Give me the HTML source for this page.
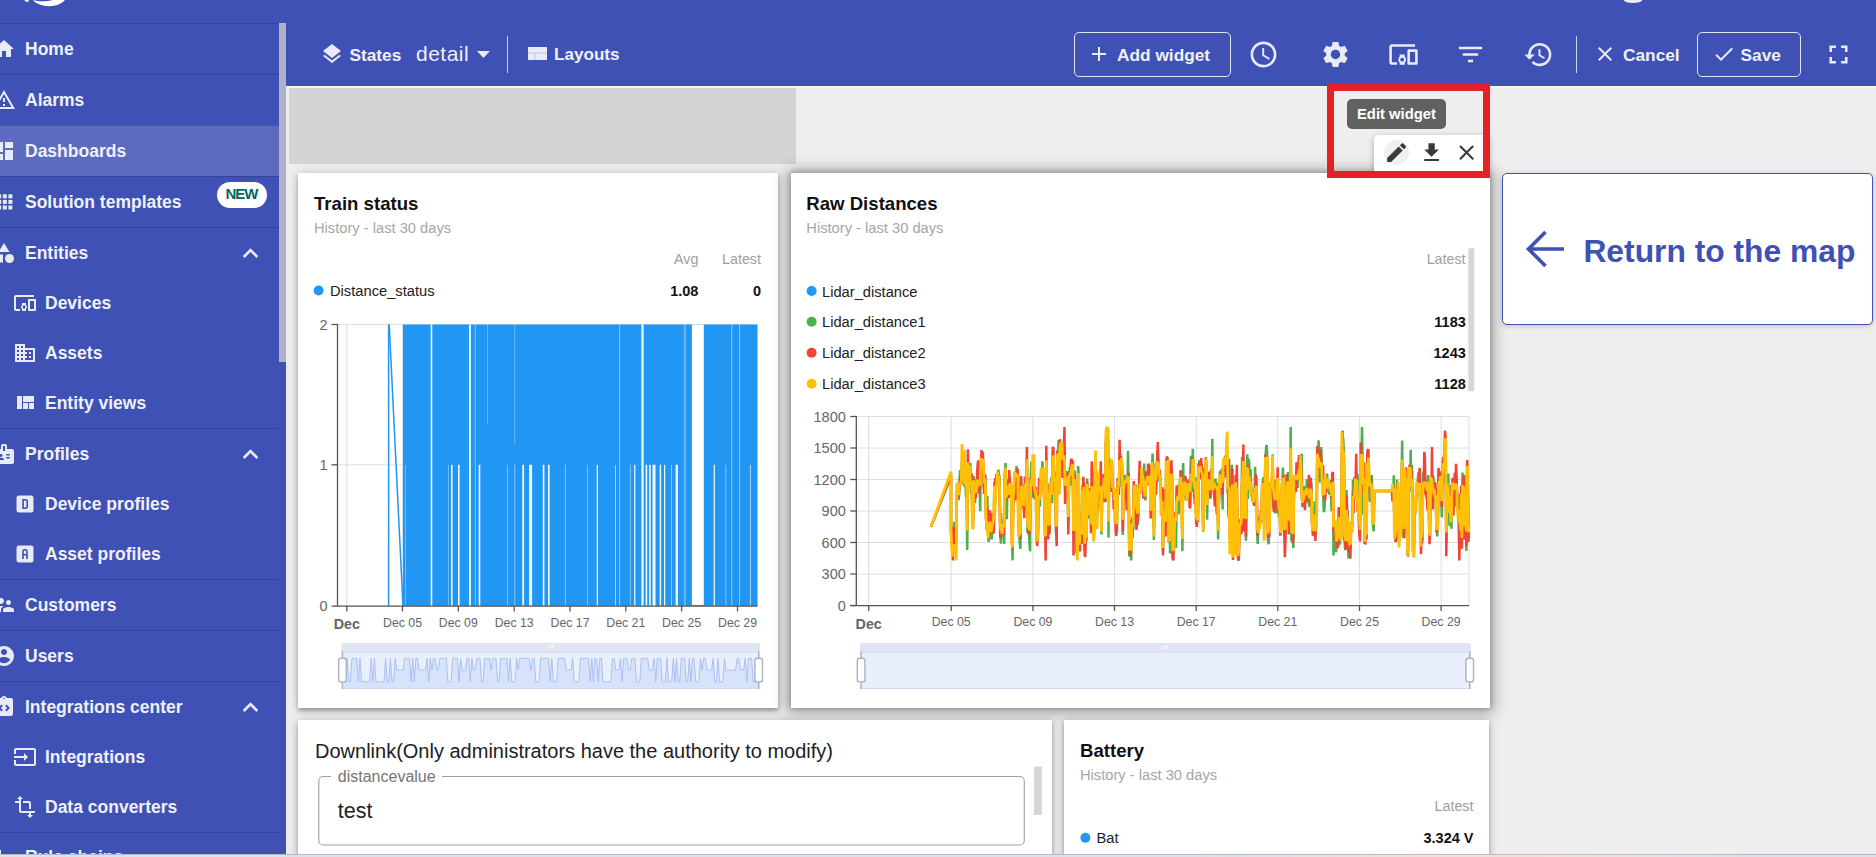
<!DOCTYPE html>
<html><head><meta charset="utf-8">
<style>
*{box-sizing:border-box;margin:0;padding:0}
html,body{width:1876px;height:857px;overflow:hidden;background:#eeeeee;font-family:"Liberation Sans",sans-serif}
.abs{position:absolute}
svg{display:block}
#sidebar{position:absolute;left:0;top:0;width:286px;height:857px;background:#3f51b5;overflow:hidden}
.sep{position:absolute;left:0;width:279px;height:1px;background:rgba(0,0,0,0.16)}
.mi{position:absolute;left:26px;color:#eef0fa;font-size:17.5px;font-weight:bold;white-space:nowrap;line-height:normal}
.ico{position:absolute}
#toolbar{position:absolute;left:0;top:0;width:1876px;height:86px}
.tb{position:absolute;color:#eef0fa;font-size:17.3px;font-weight:bold;white-space:nowrap}
.card{position:absolute;background:#fff;box-shadow:0 1px 3px rgba(0,0,0,0.2),0 1px 1px rgba(0,0,0,0.14)}
.title{position:absolute;font-size:18.6px;font-weight:bold;color:#111;white-space:nowrap}
.subt{position:absolute;font-size:14.7px;color:#a8a8a8;white-space:nowrap}
.lh{position:absolute;font-size:14.5px;color:#9e9e9e;white-space:nowrap}
.lt{position:absolute;font-size:14.7px;color:#222;white-space:nowrap}
.lv{position:absolute;font-size:14.5px;color:#111;font-weight:bold;white-space:nowrap}
.dot{position:absolute;width:10px;height:10px;border-radius:50%}
.ax{position:absolute;font-size:12.5px;color:#666;white-space:nowrap}
</style></head><body>
<div id="sidebar">
  <svg class="abs" style="left:0;top:0" width="80" height="10" viewBox="0 0 80 10"><path fill="#fff" d="M33 0 C36 4 43 6.2 49 6.2 C56 6.2 62 3.5 65 0 Z"/><path fill="#3f51b5" d="M33 0 C38 1.6 46 1.9 53 0 Z"/><path fill="#fff" d="M24.3 0 L29 0 C28.8 1 28 2 27 2 C26 2 25 1 24.3 0Z"/></svg>
  <div class="sep" style="top:23px"></div>
  <div class="sep" style="top:74px"></div>
  <div class="abs" style="left:0;top:125px;width:279px;height:51px;background:#5c6bc0"></div>
  <div class="sep" style="top:125px"></div>
  <div class="sep" style="top:176px"></div>
  <div class="sep" style="top:227px"></div>
  <div class="sep" style="top:428px"></div>
  <div class="sep" style="top:579px"></div>
  <div class="sep" style="top:630px"></div>
  <div class="sep" style="top:681px"></div>
  <div class="sep" style="top:832px"></div>
  <div class="abs" style="left:279px;top:23px;width:7px;height:339px;background:#aeb1c9"></div>
  <div class="abs" style="left:217px;top:182px;width:50px;height:26px;border-radius:13px;background:#fff"></div>
  <div class="abs" style="left:225.5px;top:185.3px;font-size:15px;font-weight:bold;color:#00695c;line-height:normal;letter-spacing:-1px">NEW</div>
<svg class="ico" style="left:-7.6px;top:36.5px" width="24" height="24" viewBox="0 0 24 24" fill="#e8eaf6"><path d="M10 20v-6h4v6h5v-8h3L12 3 2 12h3v8z"/></svg>
<div class="mi" style="left:25px;top:38.9px">Home</div>
<svg class="ico" style="left:-7.6px;top:87.5px" width="24" height="24" viewBox="0 0 24 24" fill="#e8eaf6"><path d="M12 5.99L19.53 19H4.47L12 5.99M12 2L1 21h22L12 2zm1 14h-2v2h2v-2zm0-6h-2v4h2v-4z"/></svg>
<div class="mi" style="left:25px;top:89.9px">Alarms</div>
<svg class="ico" style="left:-7.6px;top:138.5px" width="24" height="24" viewBox="0 0 24 24" fill="#e8eaf6"><path d="M3 13h8V3H3v10zm0 8h8v-6H3v6zm10 0h8V11h-8v10zm0-18v6h8V3h-8z"/></svg>
<div class="mi" style="left:25px;top:140.9px">Dashboards</div>
<svg class="ico" style="left:-7.6px;top:189.5px" width="24" height="24" viewBox="0 0 24 24" fill="#e8eaf6"><rect x="5.2" y="4.3" width="4" height="4"/><rect x="5.2" y="9.9" width="4" height="4"/><rect x="5.2" y="15.5" width="4" height="4"/><rect x="10.8" y="4.3" width="4" height="4"/><rect x="10.8" y="9.9" width="4" height="4"/><rect x="10.8" y="15.5" width="4" height="4"/><rect x="16.4" y="4.3" width="4" height="4"/><rect x="16.4" y="9.9" width="4" height="4"/><rect x="16.4" y="15.5" width="4" height="4"/></svg>
<div class="mi" style="left:25px;top:191.9px">Solution templates</div>
<svg class="ico" style="left:-7.6px;top:240.5px" width="24" height="24" viewBox="0 0 24 24" fill="#e8eaf6"><path d="M12 2l-5.5 9h11z"/><circle cx="17.5" cy="17.5" r="4.5"/><path d="M3 13.5h8v8H3z"/></svg>
<div class="mi" style="left:25px;top:242.9px">Entities</div>
<svg class="ico" style="left:235px;top:237.8px" width="31" height="31" viewBox="0 0 24 24" fill="#e8eaf6"><path d="M7.41 15.41L12 10.83l4.59 4.58L18 14l-6-6-6 6z"/></svg>
<svg class="ico" style="left:12.6px;top:291.0px" width="24" height="24" viewBox="0 0 24 24" fill="#e8eaf6"><path d="M3 6h18V4H3c-1.1 0-2 .9-2 2v12c0 1.1.9 2 2 2h4v-2H3V6zm10 6H9v1.78c-.61.55-1 1.33-1 2.22s.39 1.67 1 2.22V20h4v-1.78c.61-.55 1-1.34 1-2.22s-.39-1.67-1-2.22V12zm-2 5.5c-.83 0-1.5-.67-1.5-1.5s.67-1.5 1.5-1.5 1.5.67 1.5 1.5-.67 1.5-1.5 1.5zM22 8h-6c-.5 0-1 .5-1 1v10c0 .5.5 1 1 1h6c.5 0 1-.5 1-1V9c0-.5-.5-1-1-1zm-1 10h-4v-8h4v8z"/></svg>
<div class="mi" style="left:45px;top:293.4px">Devices</div>
<svg class="ico" style="left:12.6px;top:340.5px" width="24" height="24" viewBox="0 0 24 24" fill="#e8eaf6"><path d="M12 7V3H2v18h20V7H12zM6 19H4v-2h2v2zm0-4H4v-2h2v2zm0-4H4V9h2v2zm0-4H4V5h2v2zm4 12H8v-2h2v2zm0-4H8v-2h2v2zm0-4H8V9h2v2zm0-4H8V5h2v2zm10 12h-8v-2h2v-2h-2v-2h2v-2h-2V9h8v10zm-2-8h-2v2h2v-2zm0 4h-2v2h2v-2z"/></svg>
<div class="mi" style="left:45px;top:342.9px">Assets</div>
<svg class="ico" style="left:12.6px;top:391.0px" width="24" height="24" viewBox="0 0 24 24" fill="#e8eaf6"><path d="M10 18h5v-6h-5v6zm-6 0h5V5H4v13zm12 0h5v-6h-5v6zM10 5v6h11V5H10z"/></svg>
<div class="mi" style="left:45px;top:393.4px">Entity views</div>
<svg class="ico" style="left:-7.6px;top:441.5px" width="24" height="24" viewBox="0 0 24 24" fill="#e8eaf6"><path d="M20 7h-5V4c0-1.1-.9-2-2-2h-2c-1.1 0-2 .9-2 2v3H4c-1.1 0-2 .9-2 2v11c0 1.1.9 2 2 2h16c1.1 0 2-.9 2-2V9c0-1.1-.9-2-2-2zM9 12c.83 0 1.5.67 1.5 1.5S9.83 15 9 15s-1.5-.67-1.5-1.5S8.17 12 9 12zm3 6H6v-.43c0-.6.36-1.15.92-1.39.64-.28 1.34-.43 2.080-.43s1.44.15 2.08.43c.55.24.92.78.92 1.39V18zm1-9h-2V4h2v5zm4.25 7.5h-2.5c-.41 0-.75-.34-.75-.75s.34-.75.75-.75h2.5c.41 0 .75.34.75.75s-.34.75-.75.75zm0-3h-2.5c-.41 0-.75-.34-.75-.75s.34-.75.75-.75h2.5c.41 0 .75.34.75.75s-.34.75-.75.75z"/></svg>
<div class="mi" style="left:25px;top:443.9px">Profiles</div>
<svg class="ico" style="left:235px;top:438.8px" width="31" height="31" viewBox="0 0 24 24" fill="#e8eaf6"><path d="M7.41 15.41L12 10.83l4.59 4.58L18 14l-6-6-6 6z"/></svg>
<svg class="ico" style="left:12.6px;top:492.0px" width="24" height="24" viewBox="0 0 24 24" fill="#e8eaf6"><rect x="3.5" y="3.5" width="17" height="17" rx="2.5"/><path fill="#3f51b5" d="M9.2 7h3.6c1.4 0 2.2.9 2.2 2.2v5.6c0 1.3-.8 2.2-2.2 2.2H9.2zM10.9 8.6v6.8h1.7c.5 0 .8-.3.8-.9V9.5c0-.6-.3-.9-.8-.9z"/></svg>
<div class="mi" style="left:45px;top:494.4px">Device profiles</div>
<svg class="ico" style="left:12.6px;top:542.0px" width="24" height="24" viewBox="0 0 24 24" fill="#e8eaf6"><rect x="3.5" y="3.5" width="17" height="17" rx="2.5"/><path fill="#3f51b5" d="M9.2 17V9.4C9.2 7.9 10.100 7 11.4 7h1.2c1.4 0 2.200.9 2.2 2.4V17h-1.6v-3.400h-2.4V17zM10.8 12.100h2.4V9.6c0-.6-.3-1-.8-1h-.8c-.5 0-.8.4-.8 1z"/></svg>
<div class="mi" style="left:45px;top:544.4px">Asset profiles</div>
<svg class="ico" style="left:-7.6px;top:592.5px" width="24" height="24" viewBox="0 0 24 24" fill="#e8eaf6"><path d="M16.5 12c1.38 0 2.49-1.12 2.49-2.5S17.88 7 16.5 7C15.12 7 14 8.12 14 9.5s1.12 2.5 2.5 2.5zM9 11c1.66 0 2.99-1.34 2.99-3S10.66 5 9 5C7.34 5 6 6.34 6 8s1.34 3 3 3zm7.5 3c-1.830 0-5.5.92-5.5 2.75V19h11v-2.25c0-1.83-3.67-2.75-5.5-2.75zM9 13c-2.33 0-7 1.17-7 3.5V19h7v-2.25c0-.85.33-2.34 2.37-3.47C10.5 13.1 9.66 13 9 13z"/></svg>
<div class="mi" style="left:25px;top:594.9px">Customers</div>
<svg class="ico" style="left:-7.6px;top:643.5px" width="24" height="24" viewBox="0 0 24 24" fill="#e8eaf6"><path d="M12 2C6.48 2 2 6.48 2 12s4.48 10 10 10 10-4.48 10-10S17.52 2 12 2zm0 3c1.66 0 3 1.34 3 3s-1.34 3-3 3-3-1.34-3-3 1.34-3 3-3zm0 14.2c-2.5 0-4.71-1.28-6-3.22.03-1.99 4-3.08 6-3.08 1.99 0 5.970 1.09 6 3.08-1.29 1.94-3.5 3.22-6 3.22z"/></svg>
<div class="mi" style="left:25px;top:645.9px">Users</div>
<svg class="ico" style="left:-7.6px;top:694.5px" width="24" height="24" viewBox="0 0 24 24" fill="#e8eaf6"><path d="M19 3h-4.18C14.4 1.84 13.3 1 12 1s-2.4.84-2.82 2H5c-1.1 0-2 .9-2 2v14c0 1.1.9 2 2 2h14c1.1 0 2-.9 2-2V5c0-1.1-.9-2-2-2zm-7-.25c.41 0 .75.34.75.75s-.34.75-.75.75-.75-.34-.75-.75.34-.75.75-.75zM9.5 16.5L6 13l3.5-3.5 1.41 1.41L8.83 13l2.08 2.09L9.5 16.5zm5 0l-1.41-1.41L15.17 13l-2.08-2.09L14.5 9.5 18 13l-3.5 3.5z"/></svg>
<div class="mi" style="left:25px;top:696.9px">Integrations center</div>
<svg class="ico" style="left:235px;top:691.8px" width="31" height="31" viewBox="0 0 24 24" fill="#e8eaf6"><path d="M7.41 15.41L12 10.83l4.59 4.58L18 14l-6-6-6 6z"/></svg>
<svg class="ico" style="left:12.6px;top:745.0px" width="24" height="24" viewBox="0 0 24 24" fill="#e8eaf6"><path d="M21 3.01H3c-1.1 0-2 .9-2 2V9h2V4.99h18v14.03H3V15H1v4.01c0 1.1.9 1.98 2 1.98h18c1.1 0 2-.88 2-1.98v-14c0-1.11-.9-2-2-2zM11 16l4-4-4-4v3H1v2h10v3z"/></svg>
<div class="mi" style="left:45px;top:747.4px">Integrations</div>
<svg class="ico" style="left:12.6px;top:795.0px" width="24" height="24" viewBox="0 0 24 24" fill="#e8eaf6"><path d="M22 18v-2H8V4h2L7 1 4 4h2v2H2v2h4v8c0 1.1.9 2 2 2h8v2h-2l3 3 3-3h-2v-2h4zM10 8h6v6h2V8c0-1.1-.9-2-2-2h-6v2z"/></svg>
<div class="mi" style="left:45px;top:797.4px">Data converters</div>
<svg class="ico" style="left:-7.6px;top:844.5px" width="24" height="24" viewBox="0 0 24 24" fill="#e8eaf6"><path d="M3 5h6v4H3zM15 15h6v4h-6zM6 9h2v4h8v2h-2v-0H6z"/></svg>
<div class="mi" style="left:25px;top:846.9px">Rule chains</div>
</div>
<div class="abs" style="left:286px;top:0;width:1590px;height:86px;background:#3f51b5"></div>
<div class="abs" style="left:1624px;top:-3px;width:18px;height:5.5px;border-radius:50%;background:#e8eaf6"></div>
<!-- States -->
<svg class="ico" style="left:319.8px;top:41.6px" width="24" height="24" viewBox="0 0 24 24" fill="#e8eaf6"><path d="M11.99 18.54l-7.37-5.73L3 14.07l9 7 9-7-1.63-1.27-7.38 5.74zM12 16l7.36-5.73L21 9l-9-7-9 7 1.63 1.27L12 16z"/></svg>
<div class="tb" style="left:349.4px;top:44.5px">States</div>
<div class="tb" style="left:416px;top:41.5px;font-weight:normal;font-size:21px;letter-spacing:0.5px">detail</div>
<svg class="ico" style="left:477.4px;top:50.8px" width="13" height="7" viewBox="0 0 13 7" fill="#e8eaf6"><path d="M0 0h13L6.5 7z"/></svg>
<div class="abs" style="left:507px;top:36px;width:1.2px;height:37px;background:rgba(255,255,255,0.75)"></div>
<!-- Layouts -->
<svg class="ico" style="left:527.6px;top:46.8px" width="19.4" height="13.4" viewBox="0 0 19.4 13.4"><rect width="19.4" height="13.4" fill="#e8eaf6"/><rect y="5.6" width="19.4" height="0.9" fill="#b9bfe6"/><rect x="6.6" y="6" width="0.9" height="7.4" fill="#b9bfe6"/></svg>
<div class="tb" style="left:554px;top:44.8px;font-size:17.1px">Layouts</div>
<!-- right -->
<div class="abs" style="left:1074px;top:32px;width:157px;height:45px;border:1.3px solid rgba(255,255,255,0.85);border-radius:5px"></div>
<svg class="ico" style="left:1087.4px;top:41.7px" width="24" height="24" viewBox="0 0 24 24" fill="#e8eaf6"><path d="M19 13h-6v6h-2v-6H5v-2h6V5h2v6h6v2z"/></svg>
<div class="tb" style="left:1117px;top:45px">Add widget</div>
<svg class="ico" style="left:1247.5px;top:38.5px" width="31" height="31" viewBox="0 0 24 24" fill="#e8eaf6"><path d="M11.99 2C6.47 2 2 6.48 2 12s4.47 10 9.99 10C17.52 22 22 17.52 22 12S17.52 2 11.99 2zM12 20c-4.42 0-8-3.58-8-8s3.58-8 8-8 8 3.58 8 8-3.58 8-8 8zm.5-13H11v6l5.25 3.15.75-1.23-4.5-2.67z"/></svg>
<svg class="ico" style="left:1320px;top:38.5px" width="31" height="31" viewBox="0 0 24 24" fill="#e8eaf6"><path d="M19.14 12.94c.04-.3.06-.61.06-.94 0-.32-.02-.64-.07-.94l2.03-1.58c.18-.14.23-.41.12-.61l-1.92-3.32c-.12-.22-.37-.29-.59-.22l-2.39.96c-.5-.38-1.03-.7-1.62-.94l-.36-2.54c-.04-.24-.24-.41-.48-.41h-3.84c-.24 0-.43.17-.47.41l-.36 2.54c-.59.24-1.130.57-1.62.94l-2.39-.96c-.22-.08-.47 0-.59.22L2.74 8.87c-.12.21-.08.47.12.61l2.03 1.58c-.05.3-.09.63-.09.94s.02.64.07.94l-2.03 1.58c-.18.14-.23.41-.12.61l1.92 3.32c.12.22.37.29.59.22l2.39-.96c.5.38 1.03.7 1.62.94l.36 2.54c.05.24.24.41.48.41h3.84c.24 0 .44-.17.47-.41l.36-2.54c.59-.24 1.13-.56 1.62-.94l2.39.96c.22.08.47 0 .59-.22l1.92-3.32c.12-.22.07-.47-.12-.61l-2.01-1.58zM12 15.6c-1.98 0-3.6-1.62-3.6-3.6s1.62-3.6 3.6-3.6 3.6 1.62 3.6 3.6-1.62 3.6-3.6 3.6z"/></svg>
<svg class="ico" style="left:1387.5px;top:38.7px" width="31" height="31" viewBox="0 0 24 24" fill="#e8eaf6"><path d="M3 6h18V4H3c-1.1 0-2 .9-2 2v12c0 1.1.9 2 2 2h4v-2H3V6zm10 6H9v1.78c-.61.55-1 1.33-1 2.22s.39 1.67 1 2.22V20h4v-1.78c.61-.55 1-1.34 1-2.22s-.39-1.67-1-2.22V12zm-2 5.5c-.83 0-1.5-.67-1.5-1.5s.67-1.5 1.5-1.5 1.5.67 1.5 1.5-.67 1.5-1.5 1.5zM22 8h-6c-.5 0-1 .5-1 1v10c0 .5.5 1 1 1h6c.5 0 1-.5 1-1V9c0-.5-.5-1-1-1zm-1 10h-4v-8h4v8z"/></svg>
<svg class="ico" style="left:1454.9px;top:38.6px" width="31" height="31" viewBox="0 0 24 24" fill="#e8eaf6"><path d="M10 18h4v-2h-4v2zM3 6v2h18V6H3zm3 7h12v-2H6v2z"/></svg>
<svg class="ico" style="left:1522.7px;top:38.7px" width="31" height="31" viewBox="0 0 24 24" fill="#e8eaf6"><path d="M13 3c-4.97 0-9 4.03-9 9H1l3.89 3.89.07.14L9 12H6c0-3.87 3.13-7 7-7s7 3.13 7 7-3.13 7-7 7c-1.93 0-3.68-.79-4.94-2.06l-1.42 1.42C8.27 19.99 10.51 21 13 21c4.97 0 9-4.03 9-9s-4.03-9-9-9zm-1 5v5l4.28 2.54.72-1.21-3.5-2.08V8H12z"/></svg>
<div class="abs" style="left:1576px;top:36px;width:1.2px;height:37px;background:rgba(255,255,255,0.75)"></div>
<svg class="ico" style="left:1593.4px;top:42.2px" width="24" height="24" viewBox="0 0 24 24" fill="#e8eaf6"><path d="M19 6.41L17.59 5 12 10.59 6.41 5 5 6.41 10.59 12 5 17.590 6.41 19 12 13.41 17.59 19 19 17.59 13.41 12z"/></svg>
<div class="tb" style="left:1623px;top:45px">Cancel</div>
<div class="abs" style="left:1697px;top:32px;width:104px;height:45px;border:1.3px solid rgba(255,255,255,0.85);border-radius:5px"></div>
<svg class="ico" style="left:1711.7px;top:41.7px" width="24" height="24" viewBox="0 0 24 24" fill="#e8eaf6"><path d="M9 16.17L4.83 12l-1.42 1.41L9 19 21 7l-1.41-1.41z"/></svg>
<div class="tb" style="left:1740.5px;top:45px">Save</div>
<svg class="ico" style="left:1822.5px;top:38.5px" width="31" height="31" viewBox="0 0 24 24" fill="#e8eaf6"><path d="M7 14H5v5h5v-2H7v-3zm-2-4h2V7h3V5H5v5zm12 7h-3v2h5v-5h-2v3zM14 5v2h3v3h2V5h-5z"/></svg>
<div class="abs" style="left:286px;top:86px;width:1590px;height:2px;background:#f4f4f4"></div>
<div class="abs" style="left:289px;top:88px;width:507px;height:76px;background:#d3d4d6"></div>
<div class="card" style="left:298px;top:173px;width:480px;height:535px;box-shadow:0 3px 4px rgba(0,0,0,0.28),0 1px 10px rgba(0,0,0,0.2)"></div>
<div class="card" style="left:791px;top:173px;width:699px;height:535px;box-shadow:0 0 5px 1px rgba(0,0,0,0.22),0 1px 14px 4px rgba(0,0,0,0.3)"></div>
<div class="card" style="left:298px;top:720px;width:754px;height:140px;box-shadow:0 3px 4px rgba(0,0,0,0.28),0 1px 10px rgba(0,0,0,0.2)"></div>
<div class="card" style="left:1064px;top:720px;width:425px;height:140px;box-shadow:0 3px 4px rgba(0,0,0,0.28),0 1px 10px rgba(0,0,0,0.2)"></div>
<div class="card" style="left:1502px;top:173px;width:371px;height:152px;border:1px solid #3f51b5;border-radius:5px;box-shadow:0 1px 5px rgba(0,0,0,0.2)"></div>
<svg class="abs" style="left:0;top:0" width="1876" height="857" viewBox="0 0 1876 857" font-family="Liberation Sans, sans-serif">
<text x="314.0" y="210.0" font-size="18.60" fill="#111" font-weight="bold" text-anchor="start" >Train status</text>
<text x="314.0" y="232.7" font-size="14.70" fill="#a6a6a6" font-weight="normal" text-anchor="start" >History - last 30 days</text>
<text x="698.4" y="264.0" font-size="14.30" fill="#9e9e9e" font-weight="normal" text-anchor="end" >Avg</text>
<text x="761.0" y="264.0" font-size="14.30" fill="#9e9e9e" font-weight="normal" text-anchor="end" >Latest</text>
<circle cx="318.6" cy="290.5" r="5" fill="#2196f3"/>
<text x="330.0" y="296.0" font-size="14.70" fill="#212121" font-weight="normal" text-anchor="start" >Distance_status</text>
<text x="698.4" y="296.0" font-size="14.50" fill="#111" font-weight="bold" text-anchor="end" >1.08</text>
<text x="761.0" y="296.0" font-size="14.50" fill="#111" font-weight="bold" text-anchor="end" >0</text>
<line x1="346.8" y1="324.5" x2="346.8" y2="606" stroke="#dedede" stroke-width="1"/>
<line x1="402.5" y1="324.5" x2="402.5" y2="606" stroke="#dedede" stroke-width="1"/>
<line x1="458.3" y1="324.5" x2="458.3" y2="606" stroke="#dedede" stroke-width="1"/>
<line x1="514.2" y1="324.5" x2="514.2" y2="606" stroke="#dedede" stroke-width="1"/>
<line x1="570.0" y1="324.5" x2="570.0" y2="606" stroke="#dedede" stroke-width="1"/>
<line x1="625.8" y1="324.5" x2="625.8" y2="606" stroke="#dedede" stroke-width="1"/>
<line x1="681.6" y1="324.5" x2="681.6" y2="606" stroke="#dedede" stroke-width="1"/>
<line x1="737.5" y1="324.5" x2="737.5" y2="606" stroke="#dedede" stroke-width="1"/>
<line x1="337.5" y1="324.5" x2="757.5" y2="324.5" stroke="#dedede" stroke-width="1"/>
<line x1="337.5" y1="464.8" x2="757.5" y2="464.8" stroke="#dedede" stroke-width="1"/>
<path d="M388.5 324.5 L403 606 L388.5 606 Z" fill="none"/>
<line x1="388.6" y1="324.5" x2="388.6" y2="606" stroke="#2196f3" stroke-width="1.5"/>
<line x1="389.2" y1="324.5" x2="403" y2="606" stroke="#2196f3" stroke-width="1.5"/>
<rect x="403" y="324.5" width="354.5" height="281.5" fill="#2196f3"/>
<rect x="430.7" y="324.5" width="1.6" height="281.5" fill="#fff" opacity="0.95"/>
<rect x="469.1" y="324.5" width="1.8" height="281.5" fill="#fff" opacity="0.95"/>
<rect x="474.9" y="324.5" width="0.7" height="281.5" fill="#fff" opacity="0.60"/>
<rect x="641.4" y="324.5" width="2.2" height="281.5" fill="#fff" opacity="0.95"/>
<rect x="619.3" y="324.5" width="0.8" height="281.5" fill="#fff" opacity="0.60"/>
<rect x="684.4" y="324.5" width="1.0" height="281.5" fill="#fff" opacity="0.60"/>
<rect x="731.4" y="324.5" width="0.8" height="281.5" fill="#fff" opacity="0.60"/>
<rect x="739.1" y="324.5" width="0.8" height="281.5" fill="#fff" opacity="0.60"/>
<rect x="405.0" y="464.8" width="0.6" height="141.2" fill="#fff" opacity="0.60"/>
<rect x="448.0" y="464.8" width="0.6" height="141.2" fill="#fff" opacity="0.60"/>
<rect x="451.0" y="464.8" width="1.6" height="141.2" fill="#fff" opacity="0.95"/>
<rect x="458.0" y="464.8" width="1.6" height="141.2" fill="#fff" opacity="0.95"/>
<rect x="478.7" y="464.8" width="1.6" height="141.2" fill="#fff" opacity="0.95"/>
<rect x="507.1" y="464.8" width="0.7" height="141.2" fill="#fff" opacity="0.60"/>
<rect x="514.4" y="464.8" width="0.8" height="141.2" fill="#fff" opacity="0.60"/>
<rect x="522.3" y="464.8" width="1.8" height="141.2" fill="#fff" opacity="0.95"/>
<rect x="529.1" y="464.8" width="3.0" height="141.2" fill="#fff" opacity="0.95"/>
<rect x="542.8" y="464.8" width="1.6" height="141.2" fill="#fff" opacity="0.95"/>
<rect x="548.0" y="464.8" width="1.6" height="141.2" fill="#fff" opacity="0.95"/>
<rect x="564.9" y="464.8" width="0.8" height="141.2" fill="#fff" opacity="0.60"/>
<rect x="587.1" y="464.8" width="0.7" height="141.2" fill="#fff" opacity="0.60"/>
<rect x="596.7" y="464.8" width="1.2" height="141.2" fill="#fff" opacity="0.95"/>
<rect x="615.0" y="464.8" width="1.0" height="141.2" fill="#fff" opacity="0.60"/>
<rect x="629.9" y="464.8" width="0.7" height="141.2" fill="#fff" opacity="0.60"/>
<rect x="634.2" y="464.8" width="1.2" height="141.2" fill="#fff" opacity="0.95"/>
<rect x="645.6" y="464.8" width="1.6" height="141.2" fill="#fff" opacity="0.95"/>
<rect x="649.1" y="464.8" width="1.6" height="141.2" fill="#fff" opacity="0.95"/>
<rect x="652.5" y="464.8" width="3.0" height="141.2" fill="#fff" opacity="0.95"/>
<rect x="659.7" y="464.8" width="1.4" height="141.2" fill="#fff" opacity="0.95"/>
<rect x="664.0" y="464.8" width="1.2" height="141.2" fill="#fff" opacity="0.95"/>
<rect x="671.2" y="464.8" width="0.8" height="141.2" fill="#fff" opacity="0.60"/>
<rect x="675.6" y="464.8" width="2.4" height="141.2" fill="#fff" opacity="0.95"/>
<rect x="713.7" y="464.8" width="1.2" height="141.2" fill="#fff" opacity="0.95"/>
<rect x="725.5" y="464.8" width="0.8" height="141.2" fill="#fff" opacity="0.60"/>
<rect x="749.9" y="464.8" width="1.0" height="141.2" fill="#fff" opacity="0.60"/>
<rect x="691.9" y="324.5" width="11.9" height="280.5" fill="#fff"/>
<rect x="487" y="324.5" width="0.8" height="100" fill="#fff" opacity="0.4"/>
<rect x="514.4" y="324.5" width="0.8" height="120" fill="#fff" opacity="0.4"/>
<line x1="337.5" y1="324" x2="337.5" y2="606.5" stroke="#555" stroke-width="1.3"/>
<line x1="331.5" y1="606.2" x2="757.5" y2="606.2" stroke="#555" stroke-width="1.3"/>
<line x1="331.5" y1="324.5" x2="337.5" y2="324.5" stroke="#555" stroke-width="1.3"/>
<line x1="331.5" y1="464.8" x2="337.5" y2="464.8" stroke="#555" stroke-width="1.3"/>
<line x1="346.8" y1="606" x2="346.8" y2="611.5" stroke="#555" stroke-width="1.3"/>
<line x1="402.5" y1="606" x2="402.5" y2="611.5" stroke="#555" stroke-width="1.3"/>
<line x1="458.3" y1="606" x2="458.3" y2="611.5" stroke="#555" stroke-width="1.3"/>
<line x1="514.2" y1="606" x2="514.2" y2="611.5" stroke="#555" stroke-width="1.3"/>
<line x1="570.0" y1="606" x2="570.0" y2="611.5" stroke="#555" stroke-width="1.3"/>
<line x1="625.8" y1="606" x2="625.8" y2="611.5" stroke="#555" stroke-width="1.3"/>
<line x1="681.6" y1="606" x2="681.6" y2="611.5" stroke="#555" stroke-width="1.3"/>
<line x1="737.5" y1="606" x2="737.5" y2="611.5" stroke="#555" stroke-width="1.3"/>
<text x="327.5" y="329.6" font-size="14.50" fill="#666" font-weight="normal" text-anchor="end" >2</text>
<text x="327.5" y="469.9" font-size="14.50" fill="#666" font-weight="normal" text-anchor="end" >1</text>
<text x="327.5" y="611.2" font-size="14.50" fill="#666" font-weight="normal" text-anchor="end" >0</text>
<text x="346.8" y="628.6" font-size="14.30" fill="#666" font-weight="bold" text-anchor="middle" >Dec</text>
<text x="402.5" y="626.9" font-size="12.30" fill="#666" font-weight="normal" text-anchor="middle" >Dec 05</text>
<text x="458.3" y="626.9" font-size="12.30" fill="#666" font-weight="normal" text-anchor="middle" >Dec 09</text>
<text x="514.2" y="626.9" font-size="12.30" fill="#666" font-weight="normal" text-anchor="middle" >Dec 13</text>
<text x="570.0" y="626.9" font-size="12.30" fill="#666" font-weight="normal" text-anchor="middle" >Dec 17</text>
<text x="625.8" y="626.9" font-size="12.30" fill="#666" font-weight="normal" text-anchor="middle" >Dec 21</text>
<text x="681.6" y="626.9" font-size="12.30" fill="#666" font-weight="normal" text-anchor="middle" >Dec 25</text>
<text x="737.5" y="626.9" font-size="12.30" fill="#666" font-weight="normal" text-anchor="middle" >Dec 29</text>
<path d="M341.2 652.5 V645 Q341.2 643 343.2 643 H758.0 Q760.0 643 760.0 645 V652.5 Z" fill="#dfe5f3"/>
<rect x="341.2" y="652" width="418.8" height="37" fill="#e9effc"/>
<path d="M344.0 658.4 L345.6 658.4 L347.2 658.4 L348.8 681.9 L350.4 681.9 L352.0 658.4 L353.6 658.4 L355.2 658.4 L356.8 658.4 L358.4 681.9 L360.0 658.4 L361.6 681.9 L363.2 681.9 L364.8 681.9 L366.4 681.9 L368.0 681.9 L369.6 681.9 L371.2 658.4 L372.8 681.9 L374.4 658.4 L376.0 681.9 L377.6 681.9 L379.2 681.9 L380.8 681.9 L382.4 681.9 L384.0 681.9 L385.6 658.4 L387.2 681.9 L388.8 681.9 L390.4 658.4 L392.0 681.9 L393.6 681.9 L395.2 658.4 L396.7 670.1 L398.3 670.1 L399.9 670.1 L401.5 670.1 L403.1 670.1 L404.7 658.4 L406.3 658.4 L407.9 658.4 L409.5 658.4 L411.1 681.9 L412.7 658.4 L414.3 681.9 L415.9 658.4 L417.5 658.4 L419.1 670.1 L420.7 670.1 L422.3 670.1 L423.9 670.1 L425.5 670.1 L427.1 658.4 L428.7 681.9 L430.3 658.4 L431.9 670.1 L433.5 658.4 L435.1 658.4 L436.7 670.1 L438.3 670.1 L439.9 658.4 L441.5 658.4 L443.1 658.4 L444.7 658.4 L446.3 658.4 L447.9 681.9 L449.5 681.9 L451.1 681.9 L452.7 658.4 L454.3 658.4 L455.9 658.4 L457.5 658.4 L459.1 681.9 L460.7 658.4 L462.3 670.1 L463.9 670.1 L465.5 670.1 L467.1 658.4 L468.7 658.4 L470.3 681.9 L471.9 658.4 L473.5 670.1 L475.1 670.1 L476.7 658.4 L478.3 658.4 L479.9 658.4 L481.5 681.9 L483.1 681.9 L484.7 658.4 L486.3 658.4 L487.9 658.4 L489.5 658.4 L491.1 670.1 L492.7 658.4 L494.3 658.4 L495.9 658.4 L497.5 681.9 L499.1 681.9 L500.6 658.4 L502.2 658.4 L503.8 658.4 L505.4 658.4 L507.0 658.4 L508.6 681.9 L510.2 658.4 L511.8 681.9 L513.4 681.9 L515.0 681.9 L516.6 658.4 L518.2 670.1 L519.8 658.4 L521.4 658.4 L523.0 658.4 L524.6 658.4 L526.2 658.4 L527.8 658.4 L529.4 658.4 L531.0 670.1 L532.6 658.4 L534.2 658.4 L535.8 681.9 L537.4 681.9 L539.0 681.9 L540.6 658.4 L542.2 658.4 L543.8 658.4 L545.4 658.4 L547.0 658.4 L548.6 658.4 L550.2 681.9 L551.8 658.4 L553.4 681.9 L555.0 681.9 L556.6 681.9 L558.2 658.4 L559.8 658.4 L561.4 658.4 L563.0 658.4 L564.6 658.4 L566.2 670.1 L567.8 670.1 L569.4 670.1 L571.0 670.1 L572.6 658.4 L574.2 681.9 L575.8 681.9 L577.4 681.9 L579.0 681.9 L580.6 658.4 L582.2 658.4 L583.8 658.4 L585.4 658.4 L587.0 658.4 L588.6 658.4 L590.2 681.9 L591.8 658.4 L593.4 681.9 L595.0 658.4 L596.6 658.4 L598.2 681.9 L599.8 658.4 L601.4 658.4 L602.9 681.9 L604.5 681.9 L606.1 681.9 L607.7 681.9 L609.3 681.9 L610.9 681.9 L612.5 658.4 L614.1 658.4 L615.7 670.1 L617.3 670.1 L618.9 670.1 L620.5 658.4 L622.1 681.9 L623.7 658.4 L625.3 658.4 L626.9 658.4 L628.5 670.1 L630.1 670.1 L631.7 658.4 L633.3 658.4 L634.9 658.4 L636.5 681.9 L638.1 681.9 L639.7 681.9 L641.3 658.4 L642.9 658.4 L644.5 658.4 L646.1 658.4 L647.7 658.4 L649.3 670.1 L650.9 670.1 L652.5 670.1 L654.1 658.4 L655.7 681.9 L657.3 658.4 L658.9 658.4 L660.5 658.4 L662.1 681.9 L663.7 681.9 L665.3 681.9 L666.9 658.4 L668.5 681.9 L670.1 681.9 L671.7 681.9 L673.3 658.4 L674.9 681.9 L676.5 658.4 L678.1 681.9 L679.7 681.9 L681.3 658.4 L682.9 658.4 L684.5 658.4 L686.1 681.9 L687.7 681.9 L689.3 658.4 L690.9 681.9 L692.5 658.4 L694.1 658.4 L695.7 681.9 L697.3 681.9 L698.9 681.9 L700.5 658.4 L702.1 670.1 L703.7 658.4 L705.3 658.4 L706.8 670.1 L708.4 670.1 L710.0 670.1 L711.6 670.1 L713.2 658.4 L714.8 681.9 L716.4 681.9 L718.0 658.4 L719.6 681.9 L721.2 681.9 L722.8 681.9 L724.4 658.4 L726.0 670.1 L727.6 670.1 L729.2 670.1 L730.8 670.1 L732.4 670.1 L734.0 670.1 L735.6 670.1 L737.2 658.4 L738.8 658.4 L740.4 670.1 L742.0 670.1 L743.6 670.1 L745.2 658.4 L746.8 681.9 L748.4 658.4 L750.0 658.4 L751.6 658.4 L753.2 681.9 L754.8 681.9 L756.4 658.4 L758.0 658.4 L758 688.5 L344 688.5 Z" fill="#d7e3fb"/><path d="M344.0 658.4 L345.6 658.4 L347.2 658.4 L348.8 681.9 L350.4 681.9 L352.0 658.4 L353.6 658.4 L355.2 658.4 L356.8 658.4 L358.4 681.9 L360.0 658.4 L361.6 681.9 L363.2 681.9 L364.8 681.9 L366.4 681.9 L368.0 681.9 L369.6 681.9 L371.2 658.4 L372.8 681.9 L374.4 658.4 L376.0 681.9 L377.6 681.9 L379.2 681.9 L380.8 681.9 L382.4 681.9 L384.0 681.9 L385.6 658.4 L387.2 681.9 L388.8 681.9 L390.4 658.4 L392.0 681.9 L393.6 681.9 L395.2 658.4 L396.7 670.1 L398.3 670.1 L399.9 670.1 L401.5 670.1 L403.1 670.1 L404.7 658.4 L406.3 658.4 L407.9 658.4 L409.5 658.4 L411.1 681.9 L412.7 658.4 L414.3 681.9 L415.9 658.4 L417.5 658.4 L419.1 670.1 L420.7 670.1 L422.3 670.1 L423.9 670.1 L425.5 670.1 L427.1 658.4 L428.7 681.9 L430.3 658.4 L431.9 670.1 L433.5 658.4 L435.1 658.4 L436.7 670.1 L438.3 670.1 L439.9 658.4 L441.5 658.4 L443.1 658.4 L444.7 658.4 L446.3 658.4 L447.9 681.9 L449.5 681.9 L451.1 681.9 L452.7 658.4 L454.3 658.4 L455.9 658.4 L457.5 658.4 L459.1 681.9 L460.7 658.4 L462.3 670.1 L463.9 670.1 L465.5 670.1 L467.1 658.4 L468.7 658.4 L470.3 681.9 L471.9 658.4 L473.5 670.1 L475.1 670.1 L476.7 658.4 L478.3 658.4 L479.9 658.4 L481.5 681.9 L483.1 681.9 L484.7 658.4 L486.3 658.4 L487.9 658.4 L489.5 658.4 L491.1 670.1 L492.7 658.4 L494.3 658.4 L495.9 658.4 L497.5 681.9 L499.1 681.9 L500.6 658.4 L502.2 658.4 L503.8 658.4 L505.4 658.4 L507.0 658.4 L508.6 681.9 L510.2 658.4 L511.8 681.9 L513.4 681.9 L515.0 681.9 L516.6 658.4 L518.2 670.1 L519.8 658.4 L521.4 658.4 L523.0 658.4 L524.6 658.4 L526.2 658.4 L527.8 658.4 L529.4 658.4 L531.0 670.1 L532.6 658.4 L534.2 658.4 L535.8 681.9 L537.4 681.9 L539.0 681.9 L540.6 658.4 L542.2 658.4 L543.8 658.4 L545.4 658.4 L547.0 658.4 L548.6 658.4 L550.2 681.9 L551.8 658.4 L553.4 681.9 L555.0 681.9 L556.6 681.9 L558.2 658.4 L559.8 658.4 L561.4 658.4 L563.0 658.4 L564.6 658.4 L566.2 670.1 L567.8 670.1 L569.4 670.1 L571.0 670.1 L572.6 658.4 L574.2 681.9 L575.8 681.9 L577.4 681.9 L579.0 681.9 L580.6 658.4 L582.2 658.4 L583.8 658.4 L585.4 658.4 L587.0 658.4 L588.6 658.4 L590.2 681.9 L591.8 658.4 L593.4 681.9 L595.0 658.4 L596.6 658.4 L598.2 681.9 L599.8 658.4 L601.4 658.4 L602.9 681.9 L604.5 681.9 L606.1 681.9 L607.7 681.9 L609.3 681.9 L610.9 681.9 L612.5 658.4 L614.1 658.4 L615.7 670.1 L617.3 670.1 L618.9 670.1 L620.5 658.4 L622.1 681.9 L623.7 658.4 L625.3 658.4 L626.9 658.4 L628.5 670.1 L630.1 670.1 L631.7 658.4 L633.3 658.4 L634.9 658.4 L636.5 681.9 L638.1 681.9 L639.7 681.9 L641.3 658.4 L642.9 658.4 L644.5 658.4 L646.1 658.4 L647.7 658.4 L649.3 670.1 L650.9 670.1 L652.5 670.1 L654.1 658.4 L655.7 681.9 L657.3 658.4 L658.9 658.4 L660.5 658.4 L662.1 681.9 L663.7 681.9 L665.3 681.9 L666.9 658.4 L668.5 681.9 L670.1 681.9 L671.7 681.9 L673.3 658.4 L674.9 681.9 L676.5 658.4 L678.1 681.9 L679.7 681.9 L681.3 658.4 L682.9 658.4 L684.5 658.4 L686.1 681.9 L687.7 681.9 L689.3 658.4 L690.9 681.9 L692.5 658.4 L694.1 658.4 L695.7 681.9 L697.3 681.9 L698.9 681.9 L700.5 658.4 L702.1 670.1 L703.7 658.4 L705.3 658.4 L706.8 670.1 L708.4 670.1 L710.0 670.1 L711.6 670.1 L713.2 658.4 L714.8 681.9 L716.4 681.9 L718.0 658.4 L719.6 681.9 L721.2 681.9 L722.8 681.9 L724.4 658.4 L726.0 670.1 L727.6 670.1 L729.2 670.1 L730.8 670.1 L732.4 670.1 L734.0 670.1 L735.6 670.1 L737.2 658.4 L738.8 658.4 L740.4 670.1 L742.0 670.1 L743.6 670.1 L745.2 658.4 L746.8 681.9 L748.4 658.4 L750.0 658.4 L751.6 658.4 L753.2 681.9 L754.8 681.9 L756.4 658.4 L758.0 658.4" fill="none" stroke="#a9c1f3" stroke-width="1"/>
<line x1="341.2" y1="652.3" x2="760.0" y2="652.3" stroke="#d3dcef" stroke-width="1"/>
<line x1="341.2" y1="688.5" x2="760.0" y2="688.5" stroke="#d3dcef" stroke-width="1"/>
<rect x="547.9" y="645.5" width="0.9" height="3.5" fill="#fff"/>
<rect x="550.1" y="645.5" width="0.9" height="3.5" fill="#fff"/>
<rect x="552.4" y="645.5" width="0.9" height="3.5" fill="#fff"/>
<line x1="342.5" y1="651.5" x2="342.5" y2="689" stroke="#aab3c8" stroke-width="1.4"/>
<rect x="338.7" y="658.3" width="7.6" height="23.6" rx="2.5" fill="#fff" stroke="#aab3c8" stroke-width="1.4"/>
<line x1="758.7" y1="651.5" x2="758.7" y2="689" stroke="#aab3c8" stroke-width="1.4"/>
<rect x="754.9" y="658.3" width="7.6" height="23.6" rx="2.5" fill="#fff" stroke="#aab3c8" stroke-width="1.4"/>
<text x="806.3" y="209.7" font-size="18.60" fill="#111" font-weight="bold" text-anchor="start" >Raw Distances</text>
<text x="806.3" y="232.7" font-size="14.70" fill="#a6a6a6" font-weight="normal" text-anchor="start" >History - last 30 days</text>
<text x="1465.6" y="264.0" font-size="14.30" fill="#9e9e9e" font-weight="normal" text-anchor="end" >Latest</text>
<circle cx="811.6" cy="291.0" r="5" fill="#2196f3"/>
<text x="822.0" y="296.5" font-size="14.70" fill="#212121" font-weight="normal" text-anchor="start" >Lidar_distance</text>
<circle cx="811.6" cy="321.8" r="5" fill="#4caf50"/>
<text x="822.0" y="327.3" font-size="14.70" fill="#212121" font-weight="normal" text-anchor="start" >Lidar_distance1</text>
<text x="1465.8" y="327.3" font-size="14.50" fill="#111" font-weight="bold" text-anchor="end" >1183</text>
<circle cx="811.6" cy="352.8" r="5" fill="#f44336"/>
<text x="822.0" y="358.3" font-size="14.70" fill="#212121" font-weight="normal" text-anchor="start" >Lidar_distance2</text>
<text x="1465.8" y="358.3" font-size="14.50" fill="#111" font-weight="bold" text-anchor="end" >1243</text>
<circle cx="811.6" cy="383.8" r="5" fill="#ffc107"/>
<text x="822.0" y="389.3" font-size="14.70" fill="#212121" font-weight="normal" text-anchor="start" >Lidar_distance3</text>
<text x="1465.8" y="389.3" font-size="14.50" fill="#111" font-weight="bold" text-anchor="end" >1128</text>
<rect x="1468.3" y="248.3" width="6" height="143" fill="#d6d6d6"/>
<line x1="868.7" y1="416.5" x2="868.7" y2="605.5" stroke="#dedede" stroke-width="1"/>
<line x1="951.2" y1="416.5" x2="951.2" y2="605.5" stroke="#dedede" stroke-width="1"/>
<line x1="1032.9" y1="416.5" x2="1032.9" y2="605.5" stroke="#dedede" stroke-width="1"/>
<line x1="1114.5" y1="416.5" x2="1114.5" y2="605.5" stroke="#dedede" stroke-width="1"/>
<line x1="1196.2" y1="416.5" x2="1196.2" y2="605.5" stroke="#dedede" stroke-width="1"/>
<line x1="1277.8" y1="416.5" x2="1277.8" y2="605.5" stroke="#dedede" stroke-width="1"/>
<line x1="1359.5" y1="416.5" x2="1359.5" y2="605.5" stroke="#dedede" stroke-width="1"/>
<line x1="1441.1" y1="416.5" x2="1441.1" y2="605.5" stroke="#dedede" stroke-width="1"/>
<line x1="1469" y1="416.5" x2="1469" y2="605.5" stroke="#dedede" stroke-width="1"/>
<line x1="856.3" y1="574.0" x2="1469.0" y2="574.0" stroke="#dedede" stroke-width="1"/>
<line x1="856.3" y1="542.5" x2="1469.0" y2="542.5" stroke="#dedede" stroke-width="1"/>
<line x1="856.3" y1="511.0" x2="1469.0" y2="511.0" stroke="#dedede" stroke-width="1"/>
<line x1="856.3" y1="479.5" x2="1469.0" y2="479.5" stroke="#dedede" stroke-width="1"/>
<line x1="856.3" y1="448.0" x2="1469.0" y2="448.0" stroke="#dedede" stroke-width="1"/>
<line x1="856.3" y1="416.5" x2="1469.0" y2="416.5" stroke="#dedede" stroke-width="1"/>
<g fill="none" stroke-width="2.5" stroke-linejoin="miter" stroke-miterlimit="2">
<path d="M931 526.8 L951 476.9 L951.0 532.3 L951.6 527.8 L952.3 541.0 L952.9 556.5 L953.6 535.6 L954.2 521.8 L954.9 551.0 L955.5 540.4 L956.2 542.4 L956.8 490.3 L957.5 492.9 L958.1 488.0 L958.8 500.1 L959.4 482.7 L960.1 470.1 L960.7 475.5 L961.4 480.8 L962.0 461.1 L962.7 465.7 L963.3 460.8 L964.0 484.1 L964.6 486.7 L965.3 471.9 L965.9 496.9 L966.6 489.9 L967.2 550.0 L967.9 487.3 L968.5 472.7 L969.2 466.7 L969.8 466.6 L970.4 462.9 L971.1 493.4 L971.7 487.3 L972.4 510.2 L973.0 523.4 L973.7 476.1 L974.3 487.2 L975.0 503.3 L975.6 486.1 L976.3 486.7 L976.9 493.7 L977.6 488.5 L978.2 483.5 L978.9 474.7 L979.5 483.8 L980.2 511.2 L980.8 462.1 L981.5 467.2 L982.1 456.8 L982.8 454.0 L983.4 477.4 L984.1 488.2 L984.7 473.5 L985.4 491.1 L986.0 511.4 L986.7 529.9 L987.3 495.7 L988.0 530.3 L988.6 541.9 L989.3 531.3 L989.9 516.0 L990.5 526.3 L991.2 538.1 L991.8 539.3 L992.5 517.1 L993.1 523.4 L993.8 516.8 L994.4 482.2 L995.1 505.0 L995.7 485.9 L996.4 476.7 L997.0 479.7 L997.7 484.5 L998.3 469.7 L999.0 474.4 L999.6 477.3 L1000.3 533.0 L1000.9 543.7 L1001.6 530.8 L1002.2 532.8 L1002.9 521.3 L1003.5 526.8 L1004.2 544.0 L1004.8 482.7 L1005.5 463.0 L1006.1 489.2 L1006.8 519.1 L1007.4 490.3 L1008.1 486.1 L1008.7 485.9 L1009.3 475.3 L1010.0 481.1 L1010.6 484.5 L1011.3 490.0 L1011.9 531.7 L1012.6 560.4 L1013.2 497.9 L1013.9 496.3 L1014.5 487.7 L1015.2 471.1 L1015.8 480.4 L1016.5 466.1 L1017.1 478.5 L1017.8 471.0 L1018.4 523.0 L1019.1 530.9 L1019.7 542.8 L1020.4 548.8 L1021.0 477.3 L1021.7 494.9 L1022.3 506.1 L1023.0 498.2 L1023.6 501.4 L1024.3 491.5 L1024.9 484.8 L1025.6 485.0 L1026.2 491.9 L1026.9 458.5 L1027.5 533.3 L1028.1 517.2 L1028.8 513.6 L1029.4 542.4 L1030.1 551.3 L1030.7 479.7 L1031.4 461.5 L1032.0 495.0 L1032.7 497.4 L1033.3 475.1 L1034.0 484.0 L1034.6 498.4 L1035.3 497.0 L1035.9 488.6 L1036.6 542.5 L1037.2 536.1 L1037.9 540.4 L1038.5 505.6 L1039.2 500.7 L1039.8 506.6 L1040.5 484.5 L1041.1 476.1 L1041.8 485.5 L1042.4 461.4 L1043.1 475.7 L1043.7 493.3 L1044.4 488.0 L1045.0 535.5 L1045.7 533.6 L1046.3 457.9 L1046.9 491.8 L1047.6 534.0 L1048.2 518.3 L1048.9 530.0 L1049.5 534.4 L1050.2 485.9 L1050.8 495.9 L1051.5 476.8 L1052.1 503.3 L1052.8 452.6 L1053.4 474.3 L1054.1 480.0 L1054.7 471.5 L1055.4 482.2 L1056.0 532.0 L1056.7 523.9 L1057.3 452.0 L1058.0 452.3 L1058.6 440.0 L1059.3 494.3 L1059.9 451.1 L1060.6 446.7 L1061.2 446.2 L1061.9 444.5 L1062.5 460.7 L1063.2 458.8 L1063.8 476.2 L1064.5 452.6 L1065.1 490.7 L1065.8 496.3 L1066.4 477.7 L1067.0 471.2 L1067.7 479.0 L1068.3 522.4 L1069.0 483.5 L1069.6 470.1 L1070.3 466.4 L1070.9 485.5 L1071.6 473.2 L1072.2 465.0 L1072.9 480.5 L1073.5 534.6 L1074.2 486.5 L1074.8 470.5 L1075.5 518.2 L1076.1 552.9 L1076.8 526.9 L1077.4 542.5 L1078.1 466.0 L1078.7 474.9 L1079.4 539.9 L1080.0 543.7 L1080.7 516.4 L1081.3 514.6 L1082.0 543.7 L1082.6 485.8 L1083.3 495.7 L1083.9 489.5 L1084.6 550.2 L1085.2 520.6 L1085.8 527.3 L1086.5 541.0 L1087.1 478.5 L1087.8 495.4 L1088.4 515.3 L1089.1 518.4 L1089.7 493.2 L1090.4 503.0 L1091.0 528.2 L1091.7 488.1 L1092.3 489.3 L1093.0 485.6 L1093.6 537.6 L1094.3 527.8 L1094.9 470.1 L1095.6 468.4 L1096.2 529.0 L1096.9 527.7 L1097.5 504.2 L1098.2 487.3 L1098.8 498.8 L1099.5 495.1 L1100.1 484.7 L1100.8 484.2 L1101.4 534.5 L1102.1 506.6 L1102.7 483.6 L1103.4 478.2 L1104.0 494.0 L1104.6 473.4 L1105.3 501.5 L1105.9 440.8 L1106.6 429.3 L1107.2 431.9 L1107.9 428.3 L1108.5 537.6 L1109.2 458.0 L1109.8 480.8 L1110.5 489.7 L1111.1 469.3 L1111.8 462.1 L1112.4 484.8 L1113.1 491.0 L1113.7 489.4 L1114.4 488.6 L1115.0 523.5 L1115.7 493.7 L1116.3 528.7 L1117.0 532.4 L1117.6 485.7 L1118.3 482.3 L1118.9 488.6 L1119.6 468.2 L1120.2 454.2 L1120.9 476.7 L1121.5 486.4 L1122.2 465.8 L1122.8 534.9 L1123.5 494.8 L1124.1 483.8 L1124.7 474.8 L1125.4 492.0 L1126.0 489.2 L1126.7 476.9 L1127.3 503.3 L1128.0 450.7 L1128.6 486.6 L1129.3 556.6 L1129.9 541.5 L1130.6 550.0 L1131.2 560.4 L1131.9 519.3 L1132.5 517.1 L1133.2 529.5 L1133.8 491.4 L1134.5 484.1 L1135.1 497.3 L1135.8 484.6 L1136.4 509.9 L1137.1 518.2 L1137.7 524.9 L1138.4 513.9 L1139.0 493.8 L1139.7 476.1 L1140.3 488.2 L1141.0 482.2 L1141.6 472.9 L1142.3 471.7 L1142.9 487.9 L1143.5 474.2 L1144.2 463.6 L1144.8 497.5 L1145.5 500.2 L1146.1 478.8 L1146.8 481.8 L1147.4 483.9 L1148.1 476.9 L1148.7 480.9 L1149.4 464.6 L1150.0 478.2 L1150.7 506.2 L1151.3 500.2 L1152.0 470.0 L1152.6 453.6 L1153.3 473.2 L1153.9 539.9 L1154.6 484.6 L1155.2 482.2 L1155.9 494.3 L1156.5 463.3 L1157.2 478.7 L1157.8 449.8 L1158.5 463.7 L1159.1 479.5 L1159.8 482.1 L1160.4 477.1 L1161.1 500.5 L1161.7 508.3 L1162.3 507.1 L1163.0 551.7 L1163.6 524.6 L1164.3 510.8 L1164.9 508.9 L1165.6 519.5 L1166.2 458.9 L1166.9 476.0 L1167.5 457.3 L1168.2 463.7 L1168.8 527.5 L1169.5 516.9 L1170.1 553.6 L1170.8 475.9 L1171.4 488.7 L1172.1 472.8 L1172.7 559.8 L1173.4 552.0 L1174.0 545.4 L1174.7 516.0 L1175.3 521.1 L1176.0 547.9 L1176.6 507.2 L1177.3 490.1 L1177.9 498.5 L1178.6 514.4 L1179.2 490.5 L1179.9 480.2 L1180.5 475.9 L1181.2 487.3 L1181.8 510.2 L1182.4 551.2 L1183.1 463.0 L1183.7 489.8 L1184.4 478.8 L1185.0 475.6 L1185.7 500.2 L1186.3 493.7 L1187.0 492.8 L1187.6 482.0 L1188.3 481.3 L1188.9 499.5 L1189.6 483.6 L1190.2 480.9 L1190.9 455.9 L1191.5 491.8 L1192.2 466.5 L1192.8 448.8 L1193.5 474.2 L1194.1 498.1 L1194.8 481.9 L1195.4 477.1 L1196.1 524.1 L1196.7 512.6 L1197.4 516.6 L1198.0 503.4 L1198.7 469.8 L1199.3 460.4 L1200.0 478.3 L1200.6 471.5 L1201.2 476.0 L1201.9 464.3 L1202.5 499.5 L1203.2 531.8 L1203.8 471.8 L1204.5 470.9 L1205.1 493.7 L1205.8 463.0 L1206.4 462.4 L1207.1 519.8 L1207.7 481.7 L1208.4 481.3 L1209.0 491.7 L1209.7 476.5 L1210.3 498.8 L1211.0 491.0 L1211.6 490.3 L1212.3 438.8 L1212.9 489.8 L1213.6 482.9 L1214.2 479.3 L1214.9 484.6 L1215.5 478.6 L1216.2 499.2 L1216.8 511.3 L1217.5 482.5 L1218.1 539.5 L1218.8 504.6 L1219.4 492.0 L1220.0 470.9 L1220.7 473.2 L1221.3 488.1 L1222.0 472.8 L1222.6 509.4 L1223.3 462.8 L1223.9 460.9 L1224.6 463.4 L1225.2 455.7 L1225.9 461.6 L1226.5 467.9 L1227.2 455.0 L1227.8 493.3 L1228.5 484.9 L1229.1 483.6 L1229.8 519.6 L1230.4 538.4 L1231.1 517.1 L1231.7 464.9 L1232.4 482.8 L1233.0 537.5 L1233.7 549.9 L1234.3 554.9 L1235.0 531.6 L1235.6 495.6 L1236.3 490.1 L1236.9 497.2 L1237.6 540.5 L1238.2 537.8 L1238.8 542.6 L1239.5 519.2 L1240.1 526.6 L1240.8 522.1 L1241.4 514.2 L1242.1 457.0 L1242.7 468.5 L1243.4 479.8 L1244.0 515.3 L1244.7 520.2 L1245.3 522.6 L1246.0 540.7 L1246.6 469.7 L1247.3 454.2 L1247.9 499.0 L1248.6 458.8 L1249.2 462.2 L1249.9 483.7 L1250.5 469.2 L1251.2 486.2 L1251.8 496.9 L1252.5 490.5 L1253.1 501.9 L1253.8 504.3 L1254.4 504.0 L1255.1 466.7 L1255.7 484.9 L1256.4 487.1 L1257.0 529.6 L1257.7 543.9 L1258.3 527.1 L1258.9 518.1 L1259.6 522.4 L1260.2 521.2 L1260.9 510.1 L1261.5 521.9 L1262.2 489.1 L1262.8 482.0 L1263.5 477.3 L1264.1 482.4 L1264.8 488.0 L1265.4 457.9 L1266.1 447.6 L1266.7 445.1 L1267.4 458.3 L1268.0 540.8 L1268.7 544.2 L1269.3 531.5 L1270.0 482.6 L1270.6 490.5 L1271.3 480.3 L1271.9 485.5 L1272.6 454.2 L1273.2 509.3 L1273.9 486.9 L1274.5 500.0 L1275.2 513.3 L1275.8 479.8 L1276.5 513.4 L1277.1 491.2 L1277.7 491.6 L1278.4 498.1 L1279.0 517.0 L1279.7 502.3 L1280.3 525.9 L1281.0 529.0 L1281.6 495.8 L1282.3 489.2 L1282.9 467.6 L1283.6 495.6 L1284.2 536.4 L1284.9 511.3 L1285.5 520.9 L1286.2 526.1 L1286.8 474.0 L1287.5 491.1 L1288.1 472.1 L1288.8 514.0 L1289.4 534.5 L1290.1 521.6 L1290.7 427.0 L1291.4 541.4 L1292.0 533.6 L1292.7 520.9 L1293.3 548.1 L1294.0 495.3 L1294.6 488.8 L1295.3 481.9 L1295.9 482.0 L1296.5 470.4 L1297.2 473.6 L1297.8 487.9 L1298.5 470.8 L1299.1 457.6 L1299.8 464.0 L1300.4 466.0 L1301.1 475.2 L1301.7 453.8 L1302.4 507.5 L1303.0 491.3 L1303.7 499.2 L1304.3 487.7 L1305.0 486.4 L1305.6 501.1 L1306.3 489.6 L1306.9 479.3 L1307.6 503.3 L1308.2 497.9 L1308.9 499.9 L1309.5 507.1 L1310.2 483.8 L1310.8 480.5 L1311.5 485.4 L1312.1 525.8 L1312.8 528.6 L1313.4 525.8 L1314.1 530.7 L1314.7 501.3 L1315.4 513.9 L1316.0 510.6 L1316.6 524.5 L1317.3 456.6 L1317.9 458.9 L1318.6 440.4 L1319.2 463.1 L1319.9 482.5 L1320.5 461.0 L1321.2 447.0 L1321.8 466.0 L1322.5 485.1 L1323.1 493.0 L1323.8 512.0 L1324.4 510.5 L1325.1 496.2 L1325.7 485.6 L1326.4 481.5 L1327.0 473.7 L1327.7 483.5 L1328.3 484.9 L1329.0 490.7 L1329.6 494.7 L1330.3 480.0 L1330.9 494.1 L1331.6 511.3 L1332.2 495.5 L1332.9 484.6 L1333.5 555.5 L1334.2 529.7 L1334.8 527.0 L1335.4 537.4 L1336.1 552.3 L1336.7 542.7 L1337.4 543.5 L1338.0 526.4 L1338.7 518.7 L1339.3 537.2 L1340.0 544.7 L1340.6 530.0 L1341.3 518.7 L1341.9 451.8 L1342.6 452.6 L1343.2 437.9 L1343.9 455.7 L1344.5 539.7 L1345.2 550.2 L1345.8 541.7 L1346.5 489.9 L1347.1 523.9 L1347.8 510.4 L1348.4 558.4 L1349.1 543.9 L1349.7 536.7 L1350.4 547.4 L1351.0 522.8 L1351.7 522.9 L1352.3 525.5 L1353.0 480.0 L1353.6 488.9 L1354.2 499.1 L1354.9 487.3 L1355.5 488.9 L1356.2 476.4 L1356.8 483.9 L1357.5 474.1 L1358.1 496.2 L1358.8 515.7 L1359.4 534.8 L1360.1 515.7 L1360.7 476.4 L1361.4 462.8 L1362.0 427.0 L1362.7 467.2 L1363.3 514.7 L1364.0 486.2 L1364.6 532.9 L1365.3 532.0 L1365.9 529.5 L1366.6 527.7 L1367.2 460.7 L1367.9 450.5 L1368.5 449.4 L1369.2 489.8 L1369.8 501.7 L1370.5 500.2 L1371.1 490.1 L1371.8 475.1 L1372.4 519.6 L1373.1 526.9 L1373.7 531.4 L1374.3 491.1 L1375.0 491.1 L1375.6 491.1 L1376.3 491.1 L1376.9 491.1 L1377.6 491.1 L1378.2 491.1 L1378.9 491.1 L1379.5 491.1 L1380.2 491.1 L1380.8 491.1 L1381.5 491.1 L1382.1 491.1 L1382.8 491.1 L1383.4 491.1 L1384.1 491.1 L1384.7 491.1 L1385.4 491.1 L1386.0 491.1 L1386.7 491.1 L1387.3 491.1 L1388.0 491.1 L1388.6 491.1 L1389.3 491.1 L1389.9 491.1 L1390.6 491.1 L1391.2 491.1 L1391.9 491.1 L1392.5 484.2 L1393.1 499.6 L1393.8 475.2 L1394.4 531.8 L1395.1 520.7 L1395.7 542.0 L1396.4 538.7 L1397.0 479.5 L1397.7 513.4 L1398.3 493.4 L1399.0 540.2 L1399.6 528.1 L1400.3 503.5 L1400.9 535.4 L1401.6 475.4 L1402.2 440.6 L1402.9 535.0 L1403.5 538.1 L1404.2 527.2 L1404.8 511.4 L1405.5 488.2 L1406.1 515.8 L1406.8 476.3 L1407.4 555.0 L1408.1 547.3 L1408.7 474.2 L1409.4 477.1 L1410.0 490.6 L1410.7 449.7 L1411.3 491.4 L1411.9 465.1 L1412.6 515.0 L1413.2 525.4 L1413.9 557.3 L1414.5 502.7 L1415.2 514.8 L1415.8 501.4 L1416.5 488.3 L1417.1 483.6 L1417.8 479.7 L1418.4 472.3 L1419.1 492.3 L1419.7 469.3 L1420.4 541.8 L1421.0 542.8 L1421.7 540.1 L1422.3 543.6 L1423.0 472.8 L1423.6 473.4 L1424.3 469.7 L1424.9 481.9 L1425.6 485.8 L1426.2 493.9 L1426.9 499.3 L1427.5 484.2 L1428.2 475.0 L1428.8 508.8 L1429.5 529.8 L1430.1 520.7 L1430.7 480.3 L1431.4 484.5 L1432.0 483.6 L1432.7 503.9 L1433.3 475.8 L1434.0 489.7 L1434.6 483.9 L1435.3 493.8 L1435.9 507.3 L1436.6 528.7 L1437.2 536.4 L1437.9 520.9 L1438.5 473.5 L1439.2 478.1 L1439.8 486.9 L1440.5 484.8 L1441.1 479.3 L1441.8 517.2 L1442.4 476.8 L1443.1 460.9 L1443.7 483.3 L1444.4 466.7 L1445.0 441.5 L1445.7 450.9 L1446.3 542.1 L1447.0 481.9 L1447.6 487.1 L1448.3 473.4 L1448.9 518.4 L1449.6 525.8 L1450.2 484.9 L1450.8 512.7 L1451.5 528.7 L1452.1 496.3 L1452.8 482.9 L1453.4 499.0 L1454.1 487.8 L1454.7 505.2 L1455.4 488.8 L1456.0 506.6 L1456.7 488.8 L1457.3 495.8 L1458.0 515.7 L1458.6 494.1 L1459.3 532.0 L1459.9 517.9 L1460.6 540.1 L1461.2 485.4 L1461.9 538.9 L1462.5 472.5 L1463.2 499.0 L1463.8 489.9 L1464.5 525.2 L1465.1 512.7 L1465.8 508.8 L1466.4 551.1 L1467.1 474.4 L1467.7 480.1 L1468.4 514.9 L1469.0 528.4" stroke="#4caf50"/>
<path d="M931 526.8 L951 474.2 L951.0 533.7 L951.6 540.5 L952.3 548.0 L952.9 560.4 L953.6 527.1 L954.2 533.3 L954.9 549.0 L955.5 538.6 L956.2 543.2 L956.8 498.4 L957.5 483.9 L958.1 496.1 L958.8 496.2 L959.4 488.6 L960.1 476.8 L960.7 482.1 L961.4 476.0 L962.0 484.5 L962.7 476.9 L963.3 466.8 L964.0 476.2 L964.6 482.4 L965.3 481.0 L965.9 480.3 L966.6 473.9 L967.2 524.7 L967.9 449.3 L968.5 484.2 L969.2 485.0 L969.8 482.9 L970.4 475.0 L971.1 481.7 L971.7 473.5 L972.4 522.7 L973.0 527.6 L973.7 479.6 L974.3 483.9 L975.0 479.5 L975.6 498.4 L976.3 491.7 L976.9 479.8 L977.6 465.0 L978.2 460.3 L978.9 493.1 L979.5 488.2 L980.2 473.7 L980.8 464.6 L981.5 449.9 L982.1 480.1 L982.8 451.7 L983.4 470.7 L984.1 493.9 L984.7 479.0 L985.4 474.9 L986.0 518.9 L986.7 510.3 L987.3 507.7 L988.0 527.6 L988.6 532.8 L989.3 535.6 L989.9 510.4 L990.5 530.7 L991.2 530.6 L991.8 529.9 L992.5 512.8 L993.1 529.1 L993.8 533.4 L994.4 512.4 L995.1 478.1 L995.7 487.6 L996.4 474.0 L997.0 476.9 L997.7 483.9 L998.3 472.3 L999.0 477.6 L999.6 497.7 L1000.3 538.1 L1000.9 513.0 L1001.6 526.4 L1002.2 524.7 L1002.9 531.2 L1003.5 535.1 L1004.2 520.2 L1004.8 472.4 L1005.5 478.6 L1006.1 496.9 L1006.8 498.9 L1007.4 488.5 L1008.1 479.6 L1008.7 498.2 L1009.3 470.1 L1010.0 489.9 L1010.6 482.1 L1011.3 495.5 L1011.9 543.7 L1012.6 541.2 L1013.2 500.7 L1013.9 503.2 L1014.5 480.6 L1015.2 482.0 L1015.8 489.0 L1016.5 500.1 L1017.1 473.5 L1017.8 468.7 L1018.4 528.4 L1019.1 511.3 L1019.7 531.5 L1020.4 538.8 L1021.0 476.1 L1021.7 503.7 L1022.3 490.4 L1023.0 508.6 L1023.6 496.2 L1024.3 518.1 L1024.9 476.6 L1025.6 486.6 L1026.2 494.2 L1026.9 447.1 L1027.5 516.3 L1028.1 523.1 L1028.8 535.0 L1029.4 528.4 L1030.1 529.5 L1030.7 478.7 L1031.4 478.0 L1032.0 491.8 L1032.7 490.7 L1033.3 485.7 L1034.0 488.8 L1034.6 499.3 L1035.3 494.5 L1035.9 487.1 L1036.6 526.2 L1037.2 546.3 L1037.9 533.5 L1038.5 501.9 L1039.2 478.0 L1039.8 498.1 L1040.5 479.8 L1041.1 474.3 L1041.8 482.8 L1042.4 473.3 L1043.1 478.8 L1043.7 489.5 L1044.4 507.6 L1045.0 525.2 L1045.7 560.4 L1046.3 445.7 L1046.9 497.2 L1047.6 484.1 L1048.2 539.4 L1048.9 520.4 L1049.5 532.9 L1050.2 482.0 L1050.8 491.9 L1051.5 495.2 L1052.1 489.7 L1052.8 447.0 L1053.4 447.9 L1054.1 480.8 L1054.7 492.9 L1055.4 487.6 L1056.0 527.9 L1056.7 546.1 L1057.3 451.5 L1058.0 460.9 L1058.6 461.0 L1059.3 487.3 L1059.9 439.2 L1060.6 443.4 L1061.2 455.0 L1061.9 442.6 L1062.5 478.1 L1063.2 449.8 L1063.8 450.6 L1064.5 427.0 L1065.1 503.9 L1065.8 484.1 L1066.4 495.7 L1067.0 473.0 L1067.7 476.1 L1068.3 534.4 L1069.0 483.1 L1069.6 473.8 L1070.3 477.0 L1070.9 460.3 L1071.6 458.8 L1072.2 468.5 L1072.9 460.4 L1073.5 555.4 L1074.2 479.2 L1074.8 473.9 L1075.5 528.9 L1076.1 534.0 L1076.8 521.9 L1077.4 508.7 L1078.1 474.6 L1078.7 487.1 L1079.4 531.4 L1080.0 551.4 L1080.7 528.9 L1081.3 539.2 L1082.0 543.5 L1082.6 497.3 L1083.3 476.8 L1083.9 486.5 L1084.6 554.6 L1085.2 556.9 L1085.8 541.2 L1086.5 526.0 L1087.1 482.1 L1087.8 488.6 L1088.4 515.3 L1089.1 506.1 L1089.7 488.4 L1090.4 489.3 L1091.0 533.3 L1091.7 461.4 L1092.3 473.3 L1093.0 498.5 L1093.6 513.1 L1094.3 528.0 L1094.9 471.7 L1095.6 485.1 L1096.2 516.5 L1096.9 517.4 L1097.5 497.8 L1098.2 509.1 L1098.8 477.4 L1099.5 493.6 L1100.1 492.5 L1100.8 461.2 L1101.4 510.6 L1102.1 478.5 L1102.7 491.8 L1103.4 474.6 L1104.0 502.3 L1104.6 479.7 L1105.3 502.1 L1105.9 442.3 L1106.6 445.2 L1107.2 427.0 L1107.9 429.4 L1108.5 521.0 L1109.2 467.2 L1109.8 483.1 L1110.5 486.8 L1111.1 491.9 L1111.8 461.9 L1112.4 480.7 L1113.1 489.2 L1113.7 509.3 L1114.4 502.1 L1115.0 495.4 L1115.7 531.5 L1116.3 536.0 L1117.0 506.7 L1117.6 478.4 L1118.3 493.7 L1118.9 493.7 L1119.6 439.8 L1120.2 473.7 L1120.9 456.0 L1121.5 472.3 L1122.2 469.7 L1122.8 531.7 L1123.5 499.6 L1124.1 495.9 L1124.7 498.2 L1125.4 492.5 L1126.0 489.7 L1126.7 510.1 L1127.3 479.4 L1128.0 491.2 L1128.6 472.4 L1129.3 552.1 L1129.9 542.8 L1130.6 556.2 L1131.2 536.0 L1131.9 520.0 L1132.5 538.0 L1133.2 518.1 L1133.8 481.0 L1134.5 514.1 L1135.1 495.8 L1135.8 493.2 L1136.4 530.0 L1137.1 521.9 L1137.7 520.8 L1138.4 507.0 L1139.0 482.7 L1139.7 460.7 L1140.3 493.3 L1141.0 478.7 L1141.6 473.4 L1142.3 471.6 L1142.9 491.5 L1143.5 498.6 L1144.2 487.8 L1144.8 487.4 L1145.5 479.6 L1146.1 471.6 L1146.8 472.6 L1147.4 485.2 L1148.1 463.7 L1148.7 465.5 L1149.4 483.2 L1150.0 478.6 L1150.7 518.6 L1151.3 495.4 L1152.0 463.3 L1152.6 468.1 L1153.3 463.3 L1153.9 528.1 L1154.6 485.0 L1155.2 492.8 L1155.9 493.2 L1156.5 479.4 L1157.2 458.6 L1157.8 442.0 L1158.5 479.0 L1159.1 472.2 L1159.8 469.6 L1160.4 482.8 L1161.1 496.5 L1161.7 508.8 L1162.3 487.1 L1163.0 555.6 L1163.6 489.1 L1164.3 513.2 L1164.9 523.7 L1165.6 536.6 L1166.2 468.4 L1166.9 456.2 L1167.5 464.2 L1168.2 461.2 L1168.8 542.3 L1169.5 530.7 L1170.1 525.2 L1170.8 478.0 L1171.4 460.3 L1172.1 480.3 L1172.7 557.2 L1173.4 560.4 L1174.0 536.5 L1174.7 522.3 L1175.3 512.2 L1176.0 517.5 L1176.6 486.7 L1177.3 486.5 L1177.9 502.0 L1178.6 495.9 L1179.2 488.2 L1179.9 495.8 L1180.5 470.4 L1181.2 472.7 L1181.8 508.7 L1182.4 519.9 L1183.1 482.3 L1183.7 495.7 L1184.4 484.6 L1185.0 490.7 L1185.7 476.8 L1186.3 497.9 L1187.0 490.5 L1187.6 482.1 L1188.3 500.3 L1188.9 479.2 L1189.6 506.8 L1190.2 508.4 L1190.9 477.1 L1191.5 475.9 L1192.2 457.2 L1192.8 477.0 L1193.5 462.0 L1194.1 485.6 L1194.8 504.2 L1195.4 487.7 L1196.1 512.7 L1196.7 527.0 L1197.4 519.5 L1198.0 522.0 L1198.7 463.1 L1199.3 479.1 L1200.0 477.6 L1200.6 464.3 L1201.2 458.1 L1201.9 471.4 L1202.5 472.2 L1203.2 528.0 L1203.8 467.9 L1204.5 473.1 L1205.1 476.3 L1205.8 457.4 L1206.4 469.5 L1207.1 493.0 L1207.7 492.8 L1208.4 495.3 L1209.0 471.5 L1209.7 475.8 L1210.3 497.5 L1211.0 469.0 L1211.6 483.5 L1212.3 466.7 L1212.9 484.5 L1213.6 488.8 L1214.2 495.5 L1214.9 506.5 L1215.5 489.4 L1216.2 487.0 L1216.8 514.1 L1217.5 484.5 L1218.1 522.4 L1218.8 505.9 L1219.4 479.8 L1220.0 483.5 L1220.7 489.3 L1221.3 484.7 L1222.0 468.6 L1222.6 495.0 L1223.3 459.2 L1223.9 459.7 L1224.6 468.2 L1225.2 465.6 L1225.9 477.8 L1226.5 472.6 L1227.2 464.4 L1227.8 484.5 L1228.5 516.8 L1229.1 458.7 L1229.8 539.0 L1230.4 532.4 L1231.1 535.8 L1231.7 501.5 L1232.4 468.6 L1233.0 559.9 L1233.7 542.8 L1234.3 544.6 L1235.0 531.1 L1235.6 475.1 L1236.3 491.0 L1236.9 464.9 L1237.6 554.5 L1238.2 559.7 L1238.8 560.4 L1239.5 534.8 L1240.1 528.1 L1240.8 532.0 L1241.4 534.2 L1242.1 483.7 L1242.7 479.1 L1243.4 444.6 L1244.0 531.7 L1244.7 520.8 L1245.3 524.2 L1246.0 536.7 L1246.6 483.5 L1247.3 480.1 L1247.9 464.8 L1248.6 473.4 L1249.2 484.0 L1249.9 478.6 L1250.5 481.7 L1251.2 495.1 L1251.8 489.3 L1252.5 500.8 L1253.1 496.2 L1253.8 497.7 L1254.4 506.0 L1255.1 500.5 L1255.7 474.6 L1256.4 477.8 L1257.0 500.7 L1257.7 535.7 L1258.3 521.5 L1258.9 528.1 L1259.6 521.6 L1260.2 516.1 L1260.9 523.2 L1261.5 516.6 L1262.2 485.3 L1262.8 485.7 L1263.5 481.2 L1264.1 502.5 L1264.8 504.3 L1265.4 454.6 L1266.1 460.3 L1266.7 467.7 L1267.4 464.0 L1268.0 538.1 L1268.7 526.6 L1269.3 536.5 L1270.0 504.8 L1270.6 487.2 L1271.3 489.5 L1271.9 489.2 L1272.6 461.7 L1273.2 484.6 L1273.9 511.9 L1274.5 510.9 L1275.2 498.7 L1275.8 503.8 L1276.5 508.5 L1277.1 486.1 L1277.7 467.2 L1278.4 512.9 L1279.0 501.9 L1279.7 501.2 L1280.3 535.7 L1281.0 527.3 L1281.6 487.7 L1282.3 489.2 L1282.9 494.1 L1283.6 475.2 L1284.2 532.3 L1284.9 557.2 L1285.5 539.2 L1286.2 511.4 L1286.8 474.0 L1287.5 501.7 L1288.1 487.6 L1288.8 533.8 L1289.4 516.6 L1290.1 516.7 L1290.7 458.2 L1291.4 523.1 L1292.0 512.1 L1292.7 543.2 L1293.3 539.3 L1294.0 480.6 L1294.6 475.0 L1295.3 477.9 L1295.9 492.0 L1296.5 462.2 L1297.2 473.2 L1297.8 464.2 L1298.5 464.3 L1299.1 455.1 L1299.8 472.1 L1300.4 468.4 L1301.1 468.1 L1301.7 495.3 L1302.4 504.2 L1303.0 498.0 L1303.7 505.9 L1304.3 503.6 L1305.0 510.0 L1305.6 490.0 L1306.3 500.5 L1306.9 496.1 L1307.6 493.1 L1308.2 489.7 L1308.9 474.8 L1309.5 491.0 L1310.2 506.3 L1310.8 477.9 L1311.5 498.6 L1312.1 524.3 L1312.8 534.6 L1313.4 534.8 L1314.1 528.6 L1314.7 529.7 L1315.4 541.0 L1316.0 525.8 L1316.6 519.6 L1317.3 446.0 L1317.9 460.1 L1318.6 460.8 L1319.2 459.3 L1319.9 459.7 L1320.5 449.6 L1321.2 459.2 L1321.8 472.6 L1322.5 480.7 L1323.1 465.4 L1323.8 497.9 L1324.4 491.9 L1325.1 500.3 L1325.7 487.8 L1326.4 492.7 L1327.0 482.3 L1327.7 484.8 L1328.3 481.8 L1329.0 489.0 L1329.6 483.4 L1330.3 485.8 L1330.9 490.8 L1331.6 497.7 L1332.2 473.8 L1332.9 472.1 L1333.5 530.6 L1334.2 521.0 L1334.8 538.3 L1335.4 538.7 L1336.1 540.8 L1336.7 524.4 L1337.4 548.2 L1338.0 546.2 L1338.7 507.1 L1339.3 540.2 L1340.0 530.5 L1340.6 532.0 L1341.3 538.6 L1341.9 453.7 L1342.6 430.7 L1343.2 466.1 L1343.9 458.5 L1344.5 539.1 L1345.2 543.3 L1345.8 549.5 L1346.5 495.4 L1347.1 508.4 L1347.8 527.1 L1348.4 551.8 L1349.1 541.3 L1349.7 541.3 L1350.4 558.7 L1351.0 530.6 L1351.7 527.2 L1352.3 526.0 L1353.0 492.5 L1353.6 513.5 L1354.2 478.8 L1354.9 478.9 L1355.5 484.8 L1356.2 453.8 L1356.8 482.4 L1357.5 511.6 L1358.1 505.5 L1358.8 515.4 L1359.4 536.0 L1360.1 541.5 L1360.7 442.6 L1361.4 462.8 L1362.0 471.8 L1362.7 462.8 L1363.3 493.8 L1364.0 462.6 L1364.6 543.1 L1365.3 543.3 L1365.9 527.6 L1366.6 539.4 L1367.2 454.1 L1367.9 449.0 L1368.5 464.4 L1369.2 482.3 L1369.8 483.0 L1370.5 476.4 L1371.1 484.9 L1371.8 483.6 L1372.4 521.5 L1373.1 518.3 L1373.7 515.3 L1374.3 491.1 L1375.0 491.1 L1375.6 491.1 L1376.3 491.1 L1376.9 491.1 L1377.6 491.1 L1378.2 491.1 L1378.9 491.1 L1379.5 491.1 L1380.2 491.1 L1380.8 491.1 L1381.5 491.1 L1382.1 491.1 L1382.8 491.1 L1383.4 491.1 L1384.1 491.1 L1384.7 491.1 L1385.4 491.1 L1386.0 491.1 L1386.7 491.1 L1387.3 491.1 L1388.0 491.1 L1388.6 491.1 L1389.3 491.1 L1389.9 491.1 L1390.6 491.1 L1391.2 491.1 L1391.9 491.1 L1392.5 501.8 L1393.1 489.8 L1393.8 492.9 L1394.4 521.9 L1395.1 532.7 L1395.7 541.8 L1396.4 511.5 L1397.0 492.2 L1397.7 483.0 L1398.3 495.9 L1399.0 542.5 L1399.6 530.8 L1400.3 526.9 L1400.9 533.1 L1401.6 494.1 L1402.2 461.4 L1402.9 523.9 L1403.5 523.7 L1404.2 538.2 L1404.8 488.2 L1405.5 469.8 L1406.1 467.5 L1406.8 503.0 L1407.4 549.9 L1408.1 556.7 L1408.7 493.4 L1409.4 464.9 L1410.0 474.6 L1410.7 472.3 L1411.3 487.2 L1411.9 470.8 L1412.6 518.0 L1413.2 525.4 L1413.9 545.4 L1414.5 505.0 L1415.2 502.6 L1415.8 510.9 L1416.5 488.0 L1417.1 495.4 L1417.8 485.1 L1418.4 480.8 L1419.1 485.7 L1419.7 467.9 L1420.4 508.9 L1421.0 554.2 L1421.7 534.2 L1422.3 539.7 L1423.0 486.4 L1423.6 494.9 L1424.3 451.8 L1424.9 456.6 L1425.6 494.4 L1426.2 490.8 L1426.9 494.0 L1427.5 510.5 L1428.2 488.2 L1428.8 501.2 L1429.5 544.3 L1430.1 532.5 L1430.7 484.8 L1431.4 499.1 L1432.0 446.9 L1432.7 509.5 L1433.3 486.8 L1434.0 493.9 L1434.6 482.3 L1435.3 483.8 L1435.9 493.5 L1436.6 532.4 L1437.2 529.1 L1437.9 514.9 L1438.5 467.9 L1439.2 476.0 L1439.8 487.2 L1440.5 471.4 L1441.1 484.7 L1441.8 507.2 L1442.4 480.8 L1443.1 457.0 L1443.7 460.0 L1444.4 453.2 L1445.0 430.7 L1445.7 438.1 L1446.3 556.2 L1447.0 505.1 L1447.6 487.6 L1448.3 504.7 L1448.9 488.4 L1449.6 509.1 L1450.2 495.1 L1450.8 512.6 L1451.5 511.5 L1452.1 484.4 L1452.8 477.7 L1453.4 515.7 L1454.1 493.3 L1454.7 472.7 L1455.4 499.5 L1456.0 463.8 L1456.7 479.8 L1457.3 502.5 L1458.0 504.2 L1458.6 520.3 L1459.3 560.4 L1459.9 535.1 L1460.6 531.3 L1461.2 486.2 L1461.9 548.7 L1462.5 494.1 L1463.2 490.9 L1463.8 475.0 L1464.5 539.2 L1465.1 538.4 L1465.8 519.7 L1466.4 545.7 L1467.1 460.1 L1467.7 467.5 L1468.4 542.0 L1469.0 531.1" stroke="#f44336"/>
<path d="M931 526.8 L951 471.6 L951.0 529.1 L951.6 543.6 L952.3 556.6 L952.9 545.9 L953.6 545.6 L954.2 544.8 L954.9 552.3 L955.5 546.6 L956.2 560.4 L956.8 482.7 L957.5 492.4 L958.1 494.2 L958.8 494.0 L959.4 483.2 L960.1 484.5 L960.7 482.4 L961.4 479.6 L962.0 444.1 L962.7 455.3 L963.3 459.0 L964.0 484.1 L964.6 450.2 L965.3 482.4 L965.9 485.7 L966.6 464.9 L967.2 530.4 L967.9 462.6 L968.5 469.5 L969.2 469.5 L969.8 465.5 L970.4 485.7 L971.1 483.9 L971.7 480.9 L972.4 527.7 L973.0 529.3 L973.7 480.2 L974.3 491.2 L975.0 484.5 L975.6 490.7 L976.3 492.9 L976.9 481.2 L977.6 479.9 L978.2 484.3 L978.9 486.2 L979.5 482.8 L980.2 483.0 L980.8 458.0 L981.5 460.0 L982.1 461.8 L982.8 458.9 L983.4 466.1 L984.1 483.4 L984.7 478.6 L985.4 484.5 L986.0 520.4 L986.7 522.2 L987.3 529.4 L988.0 538.0 L988.6 528.0 L989.3 526.8 L989.9 521.7 L990.5 528.7 L991.2 531.9 L991.8 526.5 L992.5 525.4 L993.1 521.9 L993.8 516.7 L994.4 485.8 L995.1 510.7 L995.7 489.8 L996.4 487.2 L997.0 478.8 L997.7 471.8 L998.3 480.6 L999.0 475.7 L999.6 489.1 L1000.3 525.3 L1000.9 529.8 L1001.6 530.9 L1002.2 534.0 L1002.9 523.3 L1003.5 526.3 L1004.2 526.2 L1004.8 467.8 L1005.5 470.3 L1006.1 497.7 L1006.8 492.8 L1007.4 492.8 L1008.1 486.0 L1008.7 494.9 L1009.3 485.4 L1010.0 484.6 L1010.6 482.9 L1011.3 485.8 L1011.9 545.6 L1012.6 547.1 L1013.2 496.6 L1013.9 492.7 L1014.5 471.8 L1015.2 473.5 L1015.8 475.2 L1016.5 473.3 L1017.1 478.1 L1017.8 474.7 L1018.4 537.0 L1019.1 534.1 L1019.7 534.9 L1020.4 532.8 L1021.0 493.1 L1021.7 485.8 L1022.3 494.8 L1023.0 494.8 L1023.6 506.0 L1024.3 500.6 L1024.9 487.0 L1025.6 483.4 L1026.2 492.3 L1026.9 459.2 L1027.5 520.1 L1028.1 527.6 L1028.8 516.7 L1029.4 530.5 L1030.1 527.8 L1030.7 483.5 L1031.4 479.1 L1032.0 486.2 L1032.7 454.7 L1033.3 480.2 L1034.0 454.2 L1034.6 491.3 L1035.3 489.3 L1035.9 497.1 L1036.6 539.3 L1037.2 541.3 L1037.9 534.0 L1038.5 495.6 L1039.2 498.6 L1039.8 499.1 L1040.5 483.0 L1041.1 467.6 L1041.8 478.1 L1042.4 473.7 L1043.1 467.4 L1043.7 493.6 L1044.4 494.6 L1045.0 535.2 L1045.7 535.7 L1046.3 460.3 L1046.9 491.8 L1047.6 494.4 L1048.2 525.2 L1048.9 524.1 L1049.5 524.0 L1050.2 482.2 L1050.8 493.6 L1051.5 491.8 L1052.1 494.6 L1052.8 455.6 L1053.4 456.6 L1054.1 481.1 L1054.7 477.3 L1055.4 481.3 L1056.0 526.6 L1056.7 523.5 L1057.3 456.6 L1058.0 453.3 L1058.6 465.2 L1059.3 493.5 L1059.9 447.0 L1060.6 445.1 L1061.2 442.9 L1061.9 442.1 L1062.5 457.2 L1063.2 460.0 L1063.8 455.4 L1064.5 461.3 L1065.1 485.7 L1065.8 482.7 L1066.4 485.4 L1067.0 476.9 L1067.7 480.5 L1068.3 517.1 L1069.0 474.8 L1069.6 475.9 L1070.3 474.2 L1070.9 472.4 L1071.6 467.7 L1072.2 464.6 L1072.9 465.9 L1073.5 531.1 L1074.2 484.2 L1074.8 478.8 L1075.5 529.3 L1076.1 530.3 L1076.8 529.5 L1077.4 560.4 L1078.1 476.0 L1078.7 473.3 L1079.4 544.6 L1080.0 531.7 L1080.7 528.5 L1081.3 532.8 L1082.0 533.1 L1082.6 490.2 L1083.3 494.4 L1083.9 486.9 L1084.6 543.8 L1085.2 536.2 L1085.8 538.3 L1086.5 534.7 L1087.1 483.5 L1087.8 491.9 L1088.4 511.9 L1089.1 514.8 L1089.7 492.5 L1090.4 491.8 L1091.0 524.5 L1091.7 486.8 L1092.3 488.8 L1093.0 486.8 L1093.6 541.6 L1094.3 535.4 L1094.9 470.8 L1095.6 450.3 L1096.2 518.7 L1096.9 528.9 L1097.5 491.8 L1098.2 471.4 L1098.8 491.3 L1099.5 486.4 L1100.1 489.5 L1100.8 493.6 L1101.4 531.5 L1102.1 488.0 L1102.7 487.2 L1103.4 484.6 L1104.0 478.8 L1104.6 478.4 L1105.3 498.5 L1105.9 432.3 L1106.6 427.0 L1107.2 432.0 L1107.9 427.0 L1108.5 521.8 L1109.2 478.3 L1109.8 477.6 L1110.5 475.3 L1111.1 467.9 L1111.8 459.3 L1112.4 487.4 L1113.1 486.2 L1113.7 488.9 L1114.4 499.8 L1115.0 492.6 L1115.7 521.9 L1116.3 523.7 L1117.0 522.3 L1117.6 490.2 L1118.3 480.9 L1118.9 486.8 L1119.6 460.0 L1120.2 463.0 L1120.9 462.4 L1121.5 458.3 L1122.2 463.1 L1122.8 519.7 L1123.5 491.2 L1124.1 481.1 L1124.7 483.2 L1125.4 480.7 L1126.0 481.5 L1126.7 480.4 L1127.3 477.7 L1128.0 476.0 L1128.6 479.3 L1129.3 550.8 L1129.9 547.4 L1130.6 543.7 L1131.2 550.3 L1131.9 525.5 L1132.5 525.6 L1133.2 521.4 L1133.8 494.5 L1134.5 487.5 L1135.1 484.9 L1135.8 491.3 L1136.4 507.1 L1137.1 510.1 L1137.7 513.5 L1138.4 511.2 L1139.0 490.4 L1139.7 487.3 L1140.3 483.8 L1141.0 492.4 L1141.6 468.3 L1142.3 474.4 L1142.9 477.4 L1143.5 480.4 L1144.2 487.6 L1144.8 496.4 L1145.5 494.0 L1146.1 480.9 L1146.8 481.5 L1147.4 476.1 L1148.1 480.2 L1148.7 483.5 L1149.4 480.4 L1150.0 475.5 L1150.7 510.7 L1151.3 506.3 L1152.0 462.4 L1152.6 467.1 L1153.3 470.7 L1153.9 536.4 L1154.6 481.2 L1155.2 478.3 L1155.9 480.3 L1156.5 461.2 L1157.2 464.3 L1157.8 462.0 L1158.5 464.4 L1159.1 474.5 L1159.8 477.5 L1160.4 478.4 L1161.1 516.0 L1161.7 501.9 L1162.3 501.4 L1163.0 547.9 L1163.6 520.0 L1164.3 510.5 L1164.9 516.8 L1165.6 521.7 L1166.2 460.9 L1166.9 462.2 L1167.5 465.5 L1168.2 459.9 L1168.8 534.5 L1169.5 541.7 L1170.1 529.5 L1170.8 480.3 L1171.4 473.7 L1172.1 480.4 L1172.7 551.1 L1173.4 542.5 L1174.0 550.7 L1174.7 521.1 L1175.3 517.2 L1176.0 521.4 L1176.6 502.3 L1177.3 498.2 L1177.9 495.8 L1178.6 501.0 L1179.2 496.6 L1179.9 482.3 L1180.5 476.8 L1181.2 485.2 L1181.8 520.9 L1182.4 538.9 L1183.1 486.4 L1183.7 484.2 L1184.4 484.7 L1185.0 481.5 L1185.7 495.3 L1186.3 493.5 L1187.0 501.2 L1187.6 496.0 L1188.3 483.1 L1188.9 490.1 L1189.6 490.2 L1190.2 491.8 L1190.9 474.1 L1191.5 475.4 L1192.2 481.9 L1192.8 459.3 L1193.5 460.6 L1194.1 484.4 L1194.8 488.8 L1195.4 481.3 L1196.1 516.5 L1196.7 518.1 L1197.4 519.4 L1198.0 518.5 L1198.7 467.0 L1199.3 470.6 L1200.0 466.3 L1200.6 467.9 L1201.2 470.8 L1201.9 472.5 L1202.5 475.3 L1203.2 530.7 L1203.8 477.3 L1204.5 475.7 L1205.1 492.2 L1205.8 458.8 L1206.4 462.0 L1207.1 505.0 L1207.7 486.4 L1208.4 479.2 L1209.0 483.0 L1209.7 485.0 L1210.3 490.0 L1211.0 486.3 L1211.6 481.3 L1212.3 456.2 L1212.9 490.5 L1213.6 483.7 L1214.2 483.7 L1214.9 485.1 L1215.5 487.3 L1216.2 486.1 L1216.8 488.0 L1217.5 487.3 L1218.1 530.7 L1218.8 496.8 L1219.4 480.1 L1220.0 474.5 L1220.7 487.8 L1221.3 479.1 L1222.0 478.3 L1222.6 482.4 L1223.3 460.0 L1223.9 459.1 L1224.6 459.6 L1225.2 463.2 L1225.9 465.0 L1226.5 442.3 L1227.2 431.6 L1227.8 487.3 L1228.5 487.3 L1229.1 486.9 L1229.8 554.4 L1230.4 536.9 L1231.1 537.8 L1231.7 497.3 L1232.4 484.4 L1233.0 557.3 L1233.7 555.1 L1234.3 553.9 L1235.0 524.6 L1235.6 482.4 L1236.3 490.5 L1236.9 489.1 L1237.6 555.8 L1238.2 554.8 L1238.8 548.8 L1239.5 523.9 L1240.1 525.1 L1240.8 524.0 L1241.4 521.1 L1242.1 477.3 L1242.7 477.2 L1243.4 461.1 L1244.0 517.9 L1244.7 517.1 L1245.3 516.8 L1246.0 518.7 L1246.6 468.5 L1247.3 467.5 L1247.9 471.7 L1248.6 489.7 L1249.2 476.3 L1249.9 485.6 L1250.5 481.8 L1251.2 490.7 L1251.8 495.2 L1252.5 493.2 L1253.1 502.5 L1253.8 496.6 L1254.4 493.9 L1255.1 489.3 L1255.7 489.0 L1256.4 485.9 L1257.0 528.9 L1257.7 529.6 L1258.3 532.9 L1258.9 521.5 L1259.6 528.9 L1260.2 524.6 L1260.9 515.2 L1261.5 519.6 L1262.2 484.1 L1262.8 483.5 L1263.5 491.2 L1264.1 540.7 L1264.8 510.3 L1265.4 457.1 L1266.1 460.9 L1266.7 458.0 L1267.4 457.4 L1268.0 533.5 L1268.7 530.5 L1269.3 531.9 L1270.0 487.5 L1270.6 488.8 L1271.3 479.8 L1271.9 478.6 L1272.6 455.3 L1273.2 486.9 L1273.9 493.0 L1274.5 497.6 L1275.2 500.1 L1275.8 495.2 L1276.5 500.0 L1277.1 479.4 L1277.7 479.2 L1278.4 503.3 L1279.0 508.1 L1279.7 509.5 L1280.3 530.5 L1281.0 532.8 L1281.6 482.9 L1282.3 483.5 L1282.9 482.6 L1283.6 477.4 L1284.2 529.8 L1284.9 528.4 L1285.5 529.1 L1286.2 526.4 L1286.8 484.8 L1287.5 483.2 L1288.1 481.2 L1288.8 517.7 L1289.4 519.5 L1290.1 521.0 L1290.7 447.7 L1291.4 532.5 L1292.0 529.5 L1292.7 533.1 L1293.3 533.5 L1294.0 475.1 L1294.6 479.5 L1295.3 477.5 L1295.9 477.4 L1296.5 475.2 L1297.2 476.3 L1297.8 480.0 L1298.5 472.6 L1299.1 470.0 L1299.8 476.2 L1300.4 455.5 L1301.1 474.5 L1301.7 491.3 L1302.4 503.0 L1303.0 493.3 L1303.7 499.8 L1304.3 494.4 L1305.0 490.6 L1305.6 492.0 L1306.3 491.3 L1306.9 488.0 L1307.6 495.4 L1308.2 493.8 L1308.9 494.2 L1309.5 498.3 L1310.2 488.8 L1310.8 491.1 L1311.5 493.0 L1312.1 524.4 L1312.8 531.1 L1313.4 514.0 L1314.1 518.3 L1314.7 520.7 L1315.4 530.8 L1316.0 529.9 L1316.6 522.7 L1317.3 454.0 L1317.9 458.8 L1318.6 458.0 L1319.2 462.8 L1319.9 467.5 L1320.5 464.1 L1321.2 462.3 L1321.8 471.0 L1322.5 492.1 L1323.1 495.3 L1323.8 491.8 L1324.4 494.7 L1325.1 480.3 L1325.7 476.3 L1326.4 486.7 L1327.0 487.1 L1327.7 481.6 L1328.3 479.0 L1329.0 484.7 L1329.6 484.6 L1330.3 490.5 L1330.9 488.0 L1331.6 496.0 L1332.2 488.9 L1332.9 482.0 L1333.5 527.1 L1334.2 523.9 L1334.8 521.7 L1335.4 521.5 L1336.1 535.7 L1336.7 541.4 L1337.4 537.3 L1338.0 538.2 L1338.7 521.3 L1339.3 518.4 L1340.0 518.2 L1340.6 538.9 L1341.3 538.9 L1341.9 432.2 L1342.6 453.1 L1343.2 458.1 L1343.9 451.8 L1344.5 535.9 L1345.2 537.5 L1345.8 541.0 L1346.5 509.7 L1347.1 529.8 L1347.8 516.0 L1348.4 541.4 L1349.1 539.9 L1349.7 544.1 L1350.4 543.6 L1351.0 522.1 L1351.7 525.8 L1352.3 532.5 L1353.0 496.3 L1353.6 496.8 L1354.2 496.7 L1354.9 488.3 L1355.5 478.5 L1356.2 482.9 L1356.8 480.4 L1357.5 500.3 L1358.1 510.9 L1358.8 514.6 L1359.4 517.1 L1360.1 530.0 L1360.7 454.1 L1361.4 459.6 L1362.0 454.3 L1362.7 457.7 L1363.3 484.6 L1364.0 478.1 L1364.6 541.7 L1365.3 530.1 L1365.9 534.9 L1366.6 531.9 L1367.2 464.8 L1367.9 463.6 L1368.5 457.6 L1369.2 475.6 L1369.8 484.8 L1370.5 486.3 L1371.1 483.5 L1371.8 489.3 L1372.4 524.8 L1373.1 521.7 L1373.7 523.9 L1374.3 491.1 L1375.0 491.1 L1375.6 491.1 L1376.3 491.1 L1376.9 491.1 L1377.6 491.1 L1378.2 491.1 L1378.9 491.1 L1379.5 491.1 L1380.2 491.1 L1380.8 491.1 L1381.5 491.1 L1382.1 491.1 L1382.8 491.1 L1383.4 491.1 L1384.1 491.1 L1384.7 491.1 L1385.4 491.1 L1386.0 491.1 L1386.7 491.1 L1387.3 491.1 L1388.0 491.1 L1388.6 491.1 L1389.3 491.1 L1389.9 491.1 L1390.6 491.1 L1391.2 491.1 L1391.9 491.1 L1392.5 483.8 L1393.1 491.0 L1393.8 489.0 L1394.4 538.7 L1395.1 534.9 L1395.7 531.4 L1396.4 520.5 L1397.0 489.2 L1397.7 491.9 L1398.3 482.1 L1399.0 547.4 L1399.6 530.6 L1400.3 531.6 L1400.9 536.5 L1401.6 475.2 L1402.2 459.5 L1402.9 522.5 L1403.5 519.7 L1404.2 528.9 L1404.8 468.2 L1405.5 482.7 L1406.1 481.1 L1406.8 478.0 L1407.4 548.5 L1408.1 555.8 L1408.7 469.8 L1409.4 468.1 L1410.0 468.3 L1410.7 472.8 L1411.3 486.3 L1411.9 479.3 L1412.6 551.7 L1413.2 528.1 L1413.9 557.3 L1414.5 498.3 L1415.2 513.0 L1415.8 505.1 L1416.5 481.7 L1417.1 489.1 L1417.8 487.9 L1418.4 492.4 L1419.1 484.4 L1419.7 483.2 L1420.4 546.6 L1421.0 515.5 L1421.7 537.6 L1422.3 531.5 L1423.0 486.6 L1423.6 484.2 L1424.3 481.8 L1424.9 483.0 L1425.6 486.9 L1426.2 485.5 L1426.9 489.3 L1427.5 490.1 L1428.2 481.6 L1428.8 520.1 L1429.5 532.8 L1430.1 536.0 L1430.7 477.3 L1431.4 478.8 L1432.0 481.2 L1432.7 490.9 L1433.3 488.0 L1434.0 495.1 L1434.6 490.4 L1435.3 498.5 L1435.9 495.3 L1436.6 530.1 L1437.2 526.8 L1437.9 529.9 L1438.5 485.9 L1439.2 482.8 L1439.8 480.7 L1440.5 476.1 L1441.1 480.2 L1441.8 501.3 L1442.4 478.3 L1443.1 463.4 L1443.7 465.2 L1444.4 468.3 L1445.0 442.8 L1445.7 437.9 L1446.3 532.6 L1447.0 490.7 L1447.6 483.9 L1448.3 490.4 L1448.9 510.8 L1449.6 512.7 L1450.2 496.6 L1450.8 522.3 L1451.5 515.2 L1452.1 482.8 L1452.8 485.4 L1453.4 484.1 L1454.1 485.0 L1454.7 489.7 L1455.4 485.8 L1456.0 484.0 L1456.7 485.2 L1457.3 507.9 L1458.0 516.9 L1458.6 510.2 L1459.3 521.5 L1459.9 522.1 L1460.6 530.4 L1461.2 494.2 L1461.9 537.9 L1462.5 485.7 L1463.2 486.8 L1463.8 489.0 L1464.5 525.0 L1465.1 525.1 L1465.8 525.7 L1466.4 531.4 L1467.1 472.7 L1467.7 465.7 L1468.4 532.3 L1469.0 526.3" stroke="#ffc107" stroke-width="2.8"/>
</g>
<line x1="856.3" y1="416" x2="856.3" y2="606" stroke="#555" stroke-width="1.3"/>
<line x1="850.3" y1="605.6" x2="1469" y2="605.6" stroke="#555" stroke-width="1.3"/>
<line x1="850.3" y1="605.5" x2="856.3" y2="605.5" stroke="#555" stroke-width="1.3"/>
<text x="845.8" y="610.5" font-size="14.50" fill="#666" font-weight="normal" text-anchor="end" >0</text>
<line x1="850.3" y1="574.0" x2="856.3" y2="574.0" stroke="#555" stroke-width="1.3"/>
<text x="845.8" y="579.0" font-size="14.50" fill="#666" font-weight="normal" text-anchor="end" >300</text>
<line x1="850.3" y1="542.5" x2="856.3" y2="542.5" stroke="#555" stroke-width="1.3"/>
<text x="845.8" y="547.5" font-size="14.50" fill="#666" font-weight="normal" text-anchor="end" >600</text>
<line x1="850.3" y1="511.0" x2="856.3" y2="511.0" stroke="#555" stroke-width="1.3"/>
<text x="845.8" y="516.0" font-size="14.50" fill="#666" font-weight="normal" text-anchor="end" >900</text>
<line x1="850.3" y1="479.5" x2="856.3" y2="479.5" stroke="#555" stroke-width="1.3"/>
<text x="845.8" y="484.5" font-size="14.50" fill="#666" font-weight="normal" text-anchor="end" >1200</text>
<line x1="850.3" y1="448.0" x2="856.3" y2="448.0" stroke="#555" stroke-width="1.3"/>
<text x="845.8" y="453.0" font-size="14.50" fill="#666" font-weight="normal" text-anchor="end" >1500</text>
<line x1="850.3" y1="416.5" x2="856.3" y2="416.5" stroke="#555" stroke-width="1.3"/>
<text x="845.8" y="421.5" font-size="14.50" fill="#666" font-weight="normal" text-anchor="end" >1800</text>
<line x1="868.7" y1="605.5" x2="868.7" y2="611" stroke="#555" stroke-width="1.3"/>
<line x1="951.2" y1="605.5" x2="951.2" y2="611" stroke="#555" stroke-width="1.3"/>
<line x1="1032.9" y1="605.5" x2="1032.9" y2="611" stroke="#555" stroke-width="1.3"/>
<line x1="1114.5" y1="605.5" x2="1114.5" y2="611" stroke="#555" stroke-width="1.3"/>
<line x1="1196.2" y1="605.5" x2="1196.2" y2="611" stroke="#555" stroke-width="1.3"/>
<line x1="1277.8" y1="605.5" x2="1277.8" y2="611" stroke="#555" stroke-width="1.3"/>
<line x1="1359.5" y1="605.5" x2="1359.5" y2="611" stroke="#555" stroke-width="1.3"/>
<line x1="1441.1" y1="605.5" x2="1441.1" y2="611" stroke="#555" stroke-width="1.3"/>
<text x="868.7" y="628.5" font-size="14.30" fill="#666" font-weight="bold" text-anchor="middle" >Dec</text>
<text x="951.2" y="625.6" font-size="12.30" fill="#666" font-weight="normal" text-anchor="middle" >Dec 05</text>
<text x="1032.9" y="625.6" font-size="12.30" fill="#666" font-weight="normal" text-anchor="middle" >Dec 09</text>
<text x="1114.5" y="625.6" font-size="12.30" fill="#666" font-weight="normal" text-anchor="middle" >Dec 13</text>
<text x="1196.2" y="625.6" font-size="12.30" fill="#666" font-weight="normal" text-anchor="middle" >Dec 17</text>
<text x="1277.8" y="625.6" font-size="12.30" fill="#666" font-weight="normal" text-anchor="middle" >Dec 21</text>
<text x="1359.5" y="625.6" font-size="12.30" fill="#666" font-weight="normal" text-anchor="middle" >Dec 25</text>
<text x="1441.1" y="625.6" font-size="12.30" fill="#666" font-weight="normal" text-anchor="middle" >Dec 29</text>
<path d="M859.8 652.5 V645 Q859.8 643 861.8 643 H1469.0 Q1471.0 643 1471.0 645 V652.5 Z" fill="#dfe5f3"/>
<rect x="859.8" y="652" width="611.2" height="37" fill="#e9effc"/>
<line x1="859.8" y1="652.3" x2="1471.0" y2="652.3" stroke="#d3dcef" stroke-width="1"/>
<line x1="859.8" y1="688.5" x2="1471.0" y2="688.5" stroke="#d3dcef" stroke-width="1"/>
<rect x="1162.8" y="645.5" width="0.9" height="3.5" fill="#fff"/>
<rect x="1165.0" y="645.5" width="0.9" height="3.5" fill="#fff"/>
<rect x="1167.2" y="645.5" width="0.9" height="3.5" fill="#fff"/>
<line x1="861.1" y1="651.5" x2="861.1" y2="689" stroke="#aab3c8" stroke-width="1.4"/>
<rect x="857.3" y="658.3" width="7.6" height="23.6" rx="2.5" fill="#fff" stroke="#aab3c8" stroke-width="1.4"/>
<line x1="1469.7" y1="651.5" x2="1469.7" y2="689" stroke="#aab3c8" stroke-width="1.4"/>
<rect x="1465.9" y="658.3" width="7.6" height="23.6" rx="2.5" fill="#fff" stroke="#aab3c8" stroke-width="1.4"/>
<path d="M1564 249 H1530 M1545.5 232 L1528.5 249 L1545.5 266" fill="none" stroke="#3f51b5" stroke-width="3.6"/>
<text x="1583.4" y="262.4" font-size="31.80" fill="#3f51b5" font-weight="bold" text-anchor="start" >Return to the map</text>
<text x="315.0" y="758.0" font-size="20.00" fill="#212121" font-weight="normal" text-anchor="start" >Downlink(Only administrators have the authority to modify)</text>
<rect x="318.8" y="776.5" width="705.5" height="68.5" rx="4.5" fill="none" stroke="#a0a0a0" stroke-width="1.1"/>
<rect x="331" y="770" width="111" height="12" fill="#fff"/>
<text x="337.8" y="782.0" font-size="16.00" fill="#757575" font-weight="normal" text-anchor="start" >distancevalue</text>
<text x="337.8" y="818.0" font-size="21.50" fill="#212121" font-weight="normal" text-anchor="start" >test</text>
<rect x="1034" y="766.5" width="7.8" height="48.5" fill="#d6d6d6"/>
<text x="1080.0" y="757.0" font-size="18.60" fill="#111" font-weight="bold" text-anchor="start" >Battery</text>
<text x="1080.0" y="780.0" font-size="14.70" fill="#a6a6a6" font-weight="normal" text-anchor="start" >History - last 30 days</text>
<text x="1473.5" y="811.0" font-size="14.30" fill="#9e9e9e" font-weight="normal" text-anchor="end" >Latest</text>
<circle cx="1085.4" cy="837.8" r="5" fill="#2196f3"/>
<text x="1096.5" y="843.3" font-size="14.70" fill="#212121" font-weight="normal" text-anchor="start" >Bat</text>
<text x="1473.5" y="843.3" font-size="14.50" fill="#111" font-weight="bold" text-anchor="end" >3.324 V</text>
</svg>
<div class="abs" style="left:1347px;top:99px;width:99px;height:30px;border-radius:5px;background:#616161"></div>
<div class="abs" style="left:1357px;top:105.5px;font-size:14.8px;font-weight:bold;color:#fff;line-height:normal">Edit widget</div>
<div class="abs" style="left:1374px;top:134.6px;width:115px;height:36px;background:#fff;border-radius:5px 0 0 0;box-shadow:0 2px 6px rgba(0,0,0,0.3)"></div>
<div class="abs" style="left:1384px;top:140px;width:25px;height:25px;border-radius:50%;background:#f0f0f0"></div>
<svg class="abs" style="left:1383.65px;top:139.85px" width="25.2" height="25.2" viewBox="0 0 24 24" fill="#3a3a3a"><path d="M3 17.25V21h3.75L17.81 9.94l-3.75-3.75L3 17.25zM20.71 7.04c.39-.39.39-1.02 0-1.41l-2.34-2.34c-.39-.39-1.02-.39-1.41 0l-1.83 1.83 3.75 3.75 1.83-1.830z"/></svg>
<svg class="abs" style="left:1418.75px;top:139.85px" width="25.2" height="25.2" viewBox="0 0 24 24" fill="#3a3a3a"><path d="M19 9h-4V3H9v6H5l7 7 7-7zM5 18v2h14v-2H5z"/></svg>
<svg class="abs" style="left:1453.75px;top:139.85px" width="25.2" height="25.2" viewBox="0 0 24 24" fill="#3a3a3a"><path d="M19 6.41L17.59 5 12 10.59 6.41 5 5 6.41 10.59 12 5 17.59 6.41 19 12 13.41 17.59 19 19 17.59 13.41 12z"/></svg>
<div class="abs" style="left:1327px;top:83.5px;width:163px;height:94.5px;border:7.7px solid #e32228"></div>
<div class="abs" style="left:0;top:853.5px;width:1876px;height:1.2px;background:#b6bbc1"></div>
<div class="abs" style="left:0;top:854.7px;width:1876px;height:2.3px;background:linear-gradient(90deg,#d8e3ee 0px,#d8e3ee 1180px,#f3e2db 1450px,#f1e3de 1560px,#d8e3ee 1760px,#d8e3ee 1876px)"></div>
</body></html>
